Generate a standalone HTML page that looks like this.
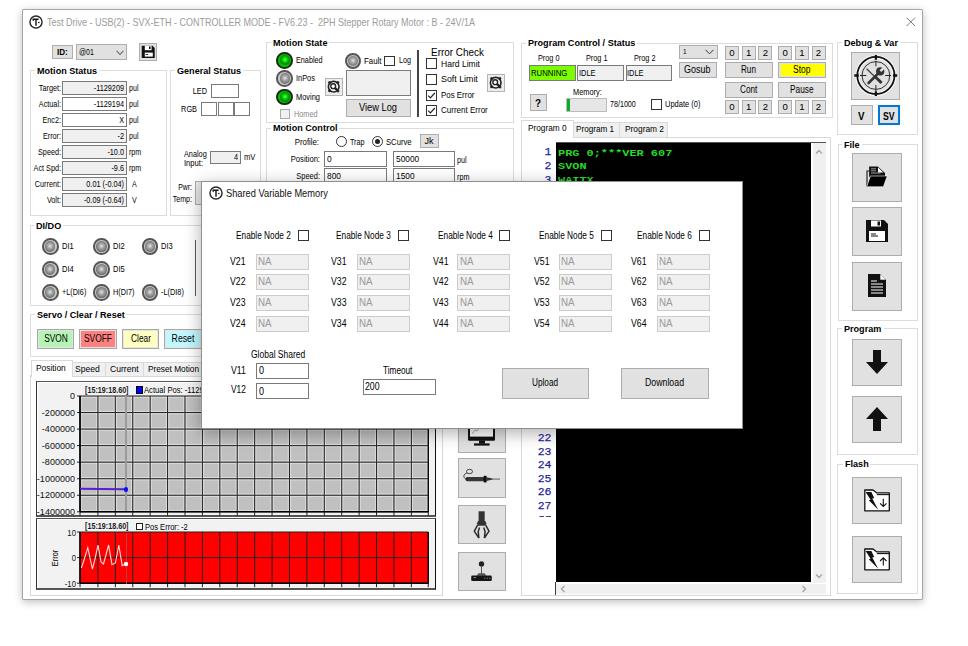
<!DOCTYPE html><html><head><meta charset="utf-8"><style>
html,body{margin:0;padding:0;background:#fff;}
body{width:968px;height:646px;position:relative;overflow:hidden;font-family:"Liberation Sans",sans-serif;}
.a{position:absolute;box-sizing:content-box;}
.t{position:absolute;white-space:pre;}
</style></head><body>
<div class="a" style="left:22px;top:9px;width:899px;height:589px;border:1px solid #a4a4a4;background:#fff;box-shadow:0 2px 9px rgba(0,0,0,0.26);border-radius:1px;"></div>
<svg class="a" style="left:28.1px;top:13.600000000000001px" width="16" height="16" viewBox="28.1 13.600000000000001 16 16"><circle cx="36.1" cy="21.6" r="6.05" fill="none" stroke="#2a2a2a" stroke-width="1.45"/><path d="M33.300000000000004 20.3 V18.8 H38.7 M36.1 18.8 V25.3" stroke="#111" stroke-width="1.4" fill="none"/><circle cx="39.0" cy="22.1" r="0.8" fill="#111"/></svg>
<div class="t" style="left:46.8px;top:14.8px;transform-origin:0 50%;font-family:'Liberation Sans',sans-serif;font-size:11px;font-weight:400;color:#9b9b9b;line-height:14px;transform:scaleX(0.818);">Test Drive - USB(2) - SVX-ETH - CONTROLLER MODE - FV6.23 -  2PH Stepper Rotary Motor : B - 24V/1A</div>
<svg class="a" style="left:906px;top:17px" width="10" height="10" viewBox="0 0 10 10"><path d="M0.6 0.6 L9 9 M9 0.6 L0.6 9" stroke="#6a6a6a" stroke-width="0.9"/></svg>
<div class="a" style="left:52px;top:45px;width:18.5px;height:12px;background:#e1e1e1;border:1px solid #adadad;"></div>
<div class="t" style="left:56.8px;top:45.0px;transform-origin:0 50%;font-family:'Liberation Sans',sans-serif;font-size:9.5px;font-weight:700;color:#000;line-height:14px;transform:scaleX(0.853);">ID:</div>
<div class="a" style="left:76px;top:44px;width:49px;height:14px;background:#e1e1e1;border:1px solid #adadad;"></div>
<div class="t" style="left:79.3px;top:44.5px;transform-origin:0 50%;font-family:'Liberation Sans',sans-serif;font-size:9px;font-weight:400;color:#000;line-height:14px;transform:scaleX(0.778);">@01</div>
<svg class="a" style="left:116px;top:50px" width="8" height="6" viewBox="0 0 8 6"><path d="M0.5 0.8 L4 4.5 L7.5 0.8" stroke="#333" stroke-width="1" fill="none"/></svg>
<div class="a" style="left:139px;top:43px;width:16px;height:16px;background:#e1e1e1;border:1px solid #adadad;"></div>
<svg class="a" style="left:141px;top:45px" width="14" height="14" viewBox="0 0 14 14"><path d="M0.7 0.7 H11.5 L13.7 2.9 V13 H0.7 Z" fill="#111"/><rect x="3.8" y="0.7" width="6.8" height="4.5" fill="#fff"/><rect x="8" y="1.4" width="1.6" height="2.6" fill="#111"/><rect x="3.8" y="7.6" width="8" height="4" fill="#fff"/><rect x="4.6" y="9" width="2.6" height="0.9" fill="#111"/></svg>
<div class="a" style="left:30px;top:70px;width:134.5px;height:144px;border:1px solid #dcdcdc;"></div>
<div class="a" style="left:35px;top:68px;width:63.967807421874994px;height:5px;background:#fff;"></div>
<div class="t" style="left:37px;top:63.5px;transform-origin:0 50%;font-family:'Liberation Sans',sans-serif;font-size:9.5px;font-weight:700;color:#000;line-height:14px;transform:scaleX(0.955);">Motion Status</div>
<div class="a" style="left:62px;top:81px;width:63px;height:12px;background:#f0f0f0;border:1px solid #7a7a7a;"></div>
<div class="t" style="left:-275.6px;width:400px;text-align:right;top:81.0px;transform-origin:100% 50%;font-family:'Liberation Sans',sans-serif;font-size:9px;font-weight:400;color:#000;line-height:14px;transform:scaleX(0.81);">-1129209</div>
<div class="t" style="left:-339.2px;width:400px;text-align:right;top:81.0px;transform-origin:100% 50%;font-family:'Liberation Sans',sans-serif;font-size:9px;font-weight:400;color:#000;line-height:14px;transform:scaleX(0.805);">Target:</div>
<div class="t" style="left:129.3px;top:81.0px;transform-origin:0 50%;font-family:'Liberation Sans',sans-serif;font-size:9px;font-weight:400;color:#000;line-height:14px;transform:scaleX(0.79);">pul</div>
<div class="a" style="left:62px;top:97px;width:63px;height:12px;background:#fff;border:1px solid #7a7a7a;"></div>
<div class="t" style="left:-275.6px;width:400px;text-align:right;top:97.0px;transform-origin:100% 50%;font-family:'Liberation Sans',sans-serif;font-size:9px;font-weight:400;color:#000;line-height:14px;transform:scaleX(0.81);">-1129194</div>
<div class="t" style="left:-339.2px;width:400px;text-align:right;top:97.0px;transform-origin:100% 50%;font-family:'Liberation Sans',sans-serif;font-size:9px;font-weight:400;color:#000;line-height:14px;transform:scaleX(0.805);">Actual:</div>
<div class="t" style="left:129.3px;top:97.0px;transform-origin:0 50%;font-family:'Liberation Sans',sans-serif;font-size:9px;font-weight:400;color:#000;line-height:14px;transform:scaleX(0.79);">pul</div>
<div class="a" style="left:62px;top:113px;width:63px;height:12px;background:#fff;border:1px solid #7a7a7a;"></div>
<div class="t" style="left:-275.6px;width:400px;text-align:right;top:113.0px;transform-origin:100% 50%;font-family:'Liberation Sans',sans-serif;font-size:9px;font-weight:400;color:#000;line-height:14px;transform:scaleX(0.81);">X</div>
<div class="t" style="left:-339.2px;width:400px;text-align:right;top:113.0px;transform-origin:100% 50%;font-family:'Liberation Sans',sans-serif;font-size:9px;font-weight:400;color:#000;line-height:14px;transform:scaleX(0.805);">Enc2:</div>
<div class="t" style="left:129.3px;top:113.0px;transform-origin:0 50%;font-family:'Liberation Sans',sans-serif;font-size:9px;font-weight:400;color:#000;line-height:14px;transform:scaleX(0.79);">pul</div>
<div class="a" style="left:62px;top:129px;width:63px;height:12px;background:#f0f0f0;border:1px solid #7a7a7a;"></div>
<div class="t" style="left:-275.6px;width:400px;text-align:right;top:129.0px;transform-origin:100% 50%;font-family:'Liberation Sans',sans-serif;font-size:9px;font-weight:400;color:#000;line-height:14px;transform:scaleX(0.81);">-2</div>
<div class="t" style="left:-339.2px;width:400px;text-align:right;top:129.0px;transform-origin:100% 50%;font-family:'Liberation Sans',sans-serif;font-size:9px;font-weight:400;color:#000;line-height:14px;transform:scaleX(0.805);">Error:</div>
<div class="t" style="left:129.3px;top:129.0px;transform-origin:0 50%;font-family:'Liberation Sans',sans-serif;font-size:9px;font-weight:400;color:#000;line-height:14px;transform:scaleX(0.79);">pul</div>
<div class="a" style="left:62px;top:145px;width:63px;height:12px;background:#f0f0f0;border:1px solid #7a7a7a;"></div>
<div class="t" style="left:-275.6px;width:400px;text-align:right;top:145.0px;transform-origin:100% 50%;font-family:'Liberation Sans',sans-serif;font-size:9px;font-weight:400;color:#000;line-height:14px;transform:scaleX(0.81);">-10.0</div>
<div class="t" style="left:-339.2px;width:400px;text-align:right;top:145.0px;transform-origin:100% 50%;font-family:'Liberation Sans',sans-serif;font-size:9px;font-weight:400;color:#000;line-height:14px;transform:scaleX(0.805);">Speed:</div>
<div class="t" style="left:129.3px;top:145.0px;transform-origin:0 50%;font-family:'Liberation Sans',sans-serif;font-size:9px;font-weight:400;color:#000;line-height:14px;transform:scaleX(0.79);">rpm</div>
<div class="a" style="left:62px;top:161px;width:63px;height:12px;background:#f0f0f0;border:1px solid #7a7a7a;"></div>
<div class="t" style="left:-275.6px;width:400px;text-align:right;top:161.0px;transform-origin:100% 50%;font-family:'Liberation Sans',sans-serif;font-size:9px;font-weight:400;color:#000;line-height:14px;transform:scaleX(0.81);">-9.6</div>
<div class="t" style="left:-339.2px;width:400px;text-align:right;top:161.0px;transform-origin:100% 50%;font-family:'Liberation Sans',sans-serif;font-size:9px;font-weight:400;color:#000;line-height:14px;transform:scaleX(0.805);">Act Spd:</div>
<div class="t" style="left:129.3px;top:161.0px;transform-origin:0 50%;font-family:'Liberation Sans',sans-serif;font-size:9px;font-weight:400;color:#000;line-height:14px;transform:scaleX(0.79);">rpm</div>
<div class="a" style="left:62px;top:177px;width:63px;height:12px;background:#f0f0f0;border:1px solid #7a7a7a;"></div>
<div class="t" style="left:-275.6px;width:400px;text-align:right;top:177.0px;transform-origin:100% 50%;font-family:'Liberation Sans',sans-serif;font-size:9px;font-weight:400;color:#000;line-height:14px;transform:scaleX(0.81);">0.01 (-0.04)</div>
<div class="t" style="left:-339.2px;width:400px;text-align:right;top:177.0px;transform-origin:100% 50%;font-family:'Liberation Sans',sans-serif;font-size:9px;font-weight:400;color:#000;line-height:14px;transform:scaleX(0.805);">Current:</div>
<div class="t" style="left:131.6px;top:177.0px;transform-origin:0 50%;font-family:'Liberation Sans',sans-serif;font-size:9px;font-weight:400;color:#000;line-height:14px;transform:scaleX(0.79);">A</div>
<div class="a" style="left:62px;top:193px;width:63px;height:12px;background:#f0f0f0;border:1px solid #7a7a7a;"></div>
<div class="t" style="left:-275.6px;width:400px;text-align:right;top:193.0px;transform-origin:100% 50%;font-family:'Liberation Sans',sans-serif;font-size:9px;font-weight:400;color:#000;line-height:14px;transform:scaleX(0.81);">-0.09 (-0.64)</div>
<div class="t" style="left:-339.2px;width:400px;text-align:right;top:193.0px;transform-origin:100% 50%;font-family:'Liberation Sans',sans-serif;font-size:9px;font-weight:400;color:#000;line-height:14px;transform:scaleX(0.805);">Volt:</div>
<div class="t" style="left:131.6px;top:193.0px;transform-origin:0 50%;font-family:'Liberation Sans',sans-serif;font-size:9px;font-weight:400;color:#000;line-height:14px;transform:scaleX(0.79);">V</div>
<div class="a" style="left:169.5px;top:70px;width:89.5px;height:144px;border:1px solid #dcdcdc;"></div>
<div class="a" style="left:175px;top:68px;width:68.030586328125px;height:5px;background:#fff;"></div>
<div class="t" style="left:177px;top:63.5px;transform-origin:0 50%;font-family:'Liberation Sans',sans-serif;font-size:9.5px;font-weight:700;color:#000;line-height:14px;transform:scaleX(0.955);">General Status</div>
<div class="t" style="left:-193px;width:400px;text-align:right;top:83.7px;transform-origin:100% 50%;font-family:'Liberation Sans',sans-serif;font-size:9px;font-weight:400;color:#000;line-height:14px;transform:scaleX(0.811);">LED</div>
<div class="a" style="left:211px;top:84px;width:26px;height:12px;background:#fff;border:1px solid #7a7a7a;"></div>
<div class="t" style="left:-203.2px;width:400px;text-align:right;top:102.0px;transform-origin:100% 50%;font-family:'Liberation Sans',sans-serif;font-size:9px;font-weight:400;color:#000;line-height:14px;transform:scaleX(0.815);">RGB</div>
<div class="a" style="left:201px;top:102px;width:14px;height:12px;background:#fff;border:1px solid #7a7a7a;"></div>
<div class="a" style="left:218px;top:102px;width:14px;height:12px;background:#fff;border:1px solid #7a7a7a;"></div>
<div class="a" style="left:234px;top:102px;width:14px;height:12px;background:#fff;border:1px solid #7a7a7a;"></div>
<div class="t" style="left:183.8px;top:146.7px;transform-origin:0 50%;font-family:'Liberation Sans',sans-serif;font-size:9px;font-weight:400;color:#000;line-height:14px;transform:scaleX(0.81);">Analog</div>
<div class="t" style="left:184.2px;top:156.0px;transform-origin:0 50%;font-family:'Liberation Sans',sans-serif;font-size:9px;font-weight:400;color:#000;line-height:14px;transform:scaleX(0.848);">Input:</div>
<div class="a" style="left:209.6px;top:150.5px;width:29.5px;height:11px;background:#f0f0f0;border:1px solid #7a7a7a;"></div>
<div class="t" style="left:-161.9px;width:400px;text-align:right;top:150.0px;transform-origin:100% 50%;font-family:'Liberation Sans',sans-serif;font-size:9px;font-weight:400;color:#000;line-height:14px;transform:scaleX(0.8);">4</div>
<div class="t" style="left:244.1px;top:150.0px;transform-origin:0 50%;font-family:'Liberation Sans',sans-serif;font-size:9px;font-weight:400;color:#000;line-height:14px;transform:scaleX(0.844);">mV</div>
<div class="t" style="left:-208.5px;width:400px;text-align:right;top:180.4px;transform-origin:100% 50%;font-family:'Liberation Sans',sans-serif;font-size:9px;font-weight:400;color:#000;line-height:14px;transform:scaleX(0.761);">Pwr:</div>
<div class="t" style="left:-208.5px;width:400px;text-align:right;top:192.0px;transform-origin:100% 50%;font-family:'Liberation Sans',sans-serif;font-size:9px;font-weight:400;color:#000;line-height:14px;transform:scaleX(0.788);">Temp:</div>
<div class="a" style="left:195px;top:181px;width:12px;height:22px;background:#e8e8e8;border:1px solid #adadad;"></div>
<div class="a" style="left:266px;top:42px;width:245.5px;height:79px;border:1px solid #dcdcdc;"></div>
<div class="a" style="left:271px;top:40px;width:58.42649453124999px;height:5px;background:#fff;"></div>
<div class="t" style="left:273px;top:35.5px;transform-origin:0 50%;font-family:'Liberation Sans',sans-serif;font-size:9.5px;font-weight:700;color:#000;line-height:14px;transform:scaleX(0.955);">Motion State</div>
<div class="a" style="left:276.40px;top:52.00px;width:12.60px;height:12.60px;border-radius:50%;border:2px solid #1a2a1a;background:#00c400;"></div>
<div class="a" style="left:279.50px;top:55.10px;width:10.40px;height:10.40px;border-radius:50%;background:radial-gradient(circle 6px at 50% 46%, #70ff70 0%, #18e818 25%, #00a000 65%, #005800 100%);"></div>
<div class="t" style="left:295.9px;top:52.6px;transform-origin:0 50%;font-family:'Liberation Sans',sans-serif;font-size:9px;font-weight:400;color:#000;line-height:14px;transform:scaleX(0.805);">Enabled</div>
<div class="a" style="left:276.40px;top:70.20px;width:12.60px;height:12.60px;border-radius:50%;border:2px solid #555;background:#c8c8c8;"></div>
<div class="a" style="left:279.50px;top:73.30px;width:10.40px;height:10.40px;border-radius:50%;background:radial-gradient(circle 6px at 50% 46%, #e4e4e4 0%, #a8a8a8 40%, #7c7c7c 80%, #626262 100%);"></div>
<div class="t" style="left:296.2px;top:71.0px;transform-origin:0 50%;font-family:'Liberation Sans',sans-serif;font-size:9px;font-weight:400;color:#000;line-height:14px;transform:scaleX(0.817);">InPos</div>
<div class="a" style="left:276.40px;top:88.80px;width:12.60px;height:12.60px;border-radius:50%;border:2px solid #1a2a1a;background:#00c400;"></div>
<div class="a" style="left:279.50px;top:91.90px;width:10.40px;height:10.40px;border-radius:50%;background:radial-gradient(circle 6px at 50% 46%, #70ff70 0%, #18e818 25%, #00a000 65%, #005800 100%);"></div>
<div class="t" style="left:295.9px;top:89.6px;transform-origin:0 50%;font-family:'Liberation Sans',sans-serif;font-size:9px;font-weight:400;color:#000;line-height:14px;transform:scaleX(0.824);">Moving</div>
<div class="a" style="left:280px;top:109px;width:7.5px;height:7.5px;background:#f0f0f0;border:1px solid #aaa;"></div>
<div class="t" style="left:293.8px;top:106.7px;transform-origin:0 50%;font-family:'Liberation Sans',sans-serif;font-size:9px;font-weight:400;color:#8a8a8a;line-height:14px;transform:scaleX(0.81);">Homed</div>
<div class="a" style="left:325px;top:78px;width:15.5px;height:15.5px;background:#ececec;border:1px solid #b4b4b4;"></div>
<svg class="a" style="left:325px;top:78px" width="17.5" height="17.5" viewBox="0 0 17.5 17.5"><circle cx="8.7" cy="8.7" r="5.3" fill="#f6f6f6" stroke="#222" stroke-width="1.6"/><circle cx="4.6" cy="4.6" r="1.5" fill="#222"/><circle cx="12.8" cy="4.6" r="1.5" fill="#222"/><circle cx="4.6" cy="12.8" r="1.5" fill="#222"/><circle cx="8.2" cy="8.2" r="2.4" fill="#fff" stroke="#222" stroke-width="1.4"/><path d="M9.9 9.9 L13.9 13.9" stroke="#222" stroke-width="2.3"/></svg>
<div class="a" style="left:344.70px;top:52.70px;width:12.60px;height:12.60px;border-radius:50%;border:2px solid #555;background:#c8c8c8;"></div>
<div class="a" style="left:347.80px;top:55.80px;width:10.40px;height:10.40px;border-radius:50%;background:radial-gradient(circle 6px at 50% 46%, #e4e4e4 0%, #a8a8a8 40%, #7c7c7c 80%, #626262 100%);"></div>
<div class="t" style="left:363.7px;top:54.0px;transform-origin:0 50%;font-family:'Liberation Sans',sans-serif;font-size:9px;font-weight:400;color:#000;line-height:14px;transform:scaleX(0.875);">Fault</div>
<div class="a" style="left:384px;top:55.5px;width:8.5px;height:8.5px;background:#fff;border:1px solid #333;"></div>
<div class="t" style="left:398.5px;top:52.8px;transform-origin:0 50%;font-family:'Liberation Sans',sans-serif;font-size:9px;font-weight:400;color:#000;line-height:14px;transform:scaleX(0.799);">Log</div>
<div class="a" style="left:346px;top:70px;width:63px;height:24px;background:#f0f0f0;border:1px solid #7a7a7a;"></div>
<div class="a" style="left:346px;top:99px;width:63px;height:16px;background:#e1e1e1;border:1px solid #adadad;"></div>
<div class="t" style="left:178px;width:400px;text-align:center;top:101.0px;transform-origin:50% 50%;font-family:'Liberation Sans',sans-serif;font-size:10px;font-weight:400;color:#000;line-height:14px;transform:scaleX(0.928);">View Log</div>
<div class="a" style="left:417.2px;top:50px;width:1.6px;height:67px;background:#444;"></div>
<div class="t" style="left:430.6px;top:45.3px;transform-origin:0 50%;font-family:'Liberation Sans',sans-serif;font-size:11px;font-weight:400;color:#000;line-height:14px;transform:scaleX(0.903);">Error Check</div>
<div class="a" style="left:426px;top:58px;width:9px;height:9px;background:#fff;border:1px solid #333;"></div>
<div class="t" style="left:441.2px;top:56.5px;transform-origin:0 50%;font-family:'Liberation Sans',sans-serif;font-size:9px;font-weight:400;color:#000;line-height:14px;transform:scaleX(0.951);">Hard Limit</div>
<div class="a" style="left:426px;top:74px;width:9px;height:9px;background:#fff;border:1px solid #333;"></div>
<div class="t" style="left:441.2px;top:72.0px;transform-origin:0 50%;font-family:'Liberation Sans',sans-serif;font-size:9px;font-weight:400;color:#000;line-height:14px;transform:scaleX(0.981);">Soft Limit</div>
<div class="a" style="left:426px;top:90px;width:9px;height:9px;background:#fff;border:1px solid #333;"></div>
<svg class="a" style="left:426px;top:90px" width="11" height="11" viewBox="0 0 11 11"><path d="M2.2 5.6 L4.4 7.8 L8.8 3" stroke="#222" stroke-width="1.2" fill="none"/></svg>
<div class="t" style="left:441.2px;top:87.7px;transform-origin:0 50%;font-family:'Liberation Sans',sans-serif;font-size:9px;font-weight:400;color:#000;line-height:14px;transform:scaleX(0.879);">Pos Error</div>
<div class="a" style="left:426px;top:105px;width:9px;height:9px;background:#fff;border:1px solid #333;"></div>
<svg class="a" style="left:426px;top:105px" width="11" height="11" viewBox="0 0 11 11"><path d="M2.2 5.6 L4.4 7.8 L8.8 3" stroke="#222" stroke-width="1.2" fill="none"/></svg>
<div class="t" style="left:441.2px;top:103.0px;transform-origin:0 50%;font-family:'Liberation Sans',sans-serif;font-size:9px;font-weight:400;color:#000;line-height:14px;transform:scaleX(0.891);">Current Error</div>
<div class="a" style="left:487px;top:74px;width:15.5px;height:15.5px;background:#ececec;border:1px solid #b4b4b4;"></div>
<svg class="a" style="left:487px;top:74px" width="17.5" height="17.5" viewBox="0 0 17.5 17.5"><circle cx="8.7" cy="8.7" r="5.3" fill="#f6f6f6" stroke="#222" stroke-width="1.6"/><circle cx="4.6" cy="4.6" r="1.5" fill="#222"/><circle cx="12.8" cy="4.6" r="1.5" fill="#222"/><circle cx="4.6" cy="12.8" r="1.5" fill="#222"/><circle cx="8.2" cy="8.2" r="2.4" fill="#fff" stroke="#222" stroke-width="1.4"/><path d="M9.9 9.9 L13.9 13.9" stroke="#222" stroke-width="2.3"/></svg>
<div class="a" style="left:266px;top:127.5px;width:245.5px;height:60px;border:1px solid #dcdcdc;"></div>
<div class="a" style="left:271px;top:125.5px;width:68.49129921875px;height:5px;background:#fff;"></div>
<div class="t" style="left:273px;top:121.0px;transform-origin:0 50%;font-family:'Liberation Sans',sans-serif;font-size:9.5px;font-weight:700;color:#000;line-height:14px;transform:scaleX(0.955);">Motion Control</div>
<div class="t" style="left:-81px;width:400px;text-align:right;top:134.5px;transform-origin:100% 50%;font-family:'Liberation Sans',sans-serif;font-size:9px;font-weight:400;color:#000;line-height:14px;transform:scaleX(0.864);">Profile:</div>
<div class="a" style="left:335.5px;top:136.0px;width:9px;height:9px;border-radius:50%;border:1px solid #333;background:#fff"></div>
<div class="t" style="left:350px;top:134.5px;transform-origin:0 50%;font-family:'Liberation Sans',sans-serif;font-size:9px;font-weight:400;color:#000;line-height:14px;transform:scaleX(0.798);">Trap</div>
<div class="a" style="left:371.5px;top:136.0px;width:9px;height:9px;border-radius:50%;border:1px solid #333;background:#fff"></div>
<div class="a" style="left:374.5px;top:139.0px;width:5px;height:5px;border-radius:50%;background:#222"></div>
<div class="t" style="left:386.3px;top:134.5px;transform-origin:0 50%;font-family:'Liberation Sans',sans-serif;font-size:9px;font-weight:400;color:#000;line-height:14px;transform:scaleX(0.853);">SCurve</div>
<div class="a" style="left:420px;top:134px;width:17px;height:12px;background:#e1e1e1;border:1px solid #adadad;"></div>
<div class="t" style="left:229px;width:400px;text-align:center;top:134.0px;transform-origin:50% 50%;font-family:'Liberation Sans',sans-serif;font-size:9px;font-weight:400;color:#000;line-height:14px;">Jk</div>
<div class="t" style="left:-80.5px;width:400px;text-align:right;top:152.0px;transform-origin:100% 50%;font-family:'Liberation Sans',sans-serif;font-size:9px;font-weight:400;color:#000;line-height:14px;transform:scaleX(0.846);">Position:</div>
<div class="a" style="left:324px;top:151px;width:61px;height:14px;background:#fff;border:1px solid #7a7a7a;"></div>
<div class="t" style="left:327px;top:152.0px;transform-origin:0 50%;font-family:'Liberation Sans',sans-serif;font-size:9.5px;font-weight:400;color:#000;line-height:14px;transform:scaleX(0.88);">0</div>
<div class="a" style="left:393px;top:151px;width:60px;height:14px;background:#fff;border:1px solid #7a7a7a;"></div>
<div class="t" style="left:396px;top:152.0px;transform-origin:0 50%;font-family:'Liberation Sans',sans-serif;font-size:9.5px;font-weight:400;color:#000;line-height:14px;transform:scaleX(0.88);">50000</div>
<div class="t" style="left:457px;top:153.0px;transform-origin:0 50%;font-family:'Liberation Sans',sans-serif;font-size:9px;font-weight:400;color:#000;line-height:14px;transform:scaleX(0.8);">pul</div>
<div class="t" style="left:-80.5px;width:400px;text-align:right;top:169.0px;transform-origin:100% 50%;font-family:'Liberation Sans',sans-serif;font-size:9px;font-weight:400;color:#000;line-height:14px;transform:scaleX(0.831);">Speed:</div>
<div class="a" style="left:324px;top:168px;width:61px;height:14px;background:#fff;border:1px solid #7a7a7a;"></div>
<div class="t" style="left:327px;top:169.0px;transform-origin:0 50%;font-family:'Liberation Sans',sans-serif;font-size:9.5px;font-weight:400;color:#000;line-height:14px;transform:scaleX(0.88);">800</div>
<div class="a" style="left:393px;top:168px;width:60px;height:14px;background:#fff;border:1px solid #7a7a7a;"></div>
<div class="t" style="left:396px;top:169.0px;transform-origin:0 50%;font-family:'Liberation Sans',sans-serif;font-size:9.5px;font-weight:400;color:#000;line-height:14px;transform:scaleX(0.88);">1500</div>
<div class="t" style="left:457px;top:169.5px;transform-origin:0 50%;font-family:'Liberation Sans',sans-serif;font-size:9px;font-weight:400;color:#000;line-height:14px;transform:scaleX(0.8);">rpm</div>
<div class="a" style="left:521px;top:42.5px;width:310px;height:73px;border:1px solid #dcdcdc;"></div>
<div class="a" style="left:526px;top:40.5px;width:111.36453203125px;height:5px;background:#fff;"></div>
<div class="t" style="left:528px;top:36.0px;transform-origin:0 50%;font-family:'Liberation Sans',sans-serif;font-size:9.5px;font-weight:700;color:#000;line-height:14px;transform:scaleX(0.955);">Program Control / Status</div>
<div class="t" style="left:537.5px;top:51.0px;transform-origin:0 50%;font-family:'Liberation Sans',sans-serif;font-size:9px;font-weight:400;color:#000;line-height:14px;transform:scaleX(0.811);">Prog 0</div>
<div class="a" style="left:529px;top:65.2px;width:44.8px;height:14.3px;background:#7cfc00;border:1px solid #7a7a7a;"></div>
<div class="t" style="left:530.5px;top:66.0px;transform-origin:0 50%;font-family:'Liberation Sans',sans-serif;font-size:9.5px;font-weight:400;color:#000;line-height:14px;transform:scaleX(0.819);">RUNNING</div>
<div class="t" style="left:585.5px;top:51.0px;transform-origin:0 50%;font-family:'Liberation Sans',sans-serif;font-size:9px;font-weight:400;color:#000;line-height:14px;transform:scaleX(0.811);">Prog 1</div>
<div class="a" style="left:577px;top:65.2px;width:44.8px;height:14.3px;background:#f0f0f0;border:1px solid #7a7a7a;"></div>
<div class="t" style="left:578.5px;top:66.0px;transform-origin:0 50%;font-family:'Liberation Sans',sans-serif;font-size:9.5px;font-weight:400;color:#000;line-height:14px;transform:scaleX(0.781);">IDLE</div>
<div class="t" style="left:634.0px;top:51.0px;transform-origin:0 50%;font-family:'Liberation Sans',sans-serif;font-size:9px;font-weight:400;color:#000;line-height:14px;transform:scaleX(0.811);">Prog 2</div>
<div class="a" style="left:625.5px;top:65.2px;width:44.8px;height:14.3px;background:#f0f0f0;border:1px solid #7a7a7a;"></div>
<div class="t" style="left:627.0px;top:66.0px;transform-origin:0 50%;font-family:'Liberation Sans',sans-serif;font-size:9.5px;font-weight:400;color:#000;line-height:14px;transform:scaleX(0.781);">IDLE</div>
<div class="a" style="left:678.5px;top:45.3px;width:37px;height:11.5px;background:#e1e1e1;border:1px solid #adadad;"></div>
<div class="t" style="left:683px;top:44.5px;transform-origin:0 50%;font-family:'Liberation Sans',sans-serif;font-size:8px;font-weight:400;color:#000;line-height:14px;transform:scaleX(0.8);">1</div>
<svg class="a" style="left:705px;top:49px" width="9" height="6" viewBox="0 0 9 6"><path d="M0.5 0.8 L4.5 4.8 L8.5 0.8" stroke="#333" stroke-width="1" fill="none"/></svg>
<div class="a" style="left:679.2px;top:61.6px;width:35.5px;height:14px;background:#e1e1e1;border:1px solid #adadad;"></div>
<div class="t" style="left:684.3px;top:63.0px;transform-origin:0 50%;font-family:'Liberation Sans',sans-serif;font-size:10px;font-weight:400;color:#000;line-height:14px;transform:scaleX(0.896);">Gosub</div>
<div class="a" style="left:725px;top:46px;width:12px;height:12px;background:#e1e1e1;border:1px solid #adadad;"></div>
<div class="t" style="left:531.9px;width:400px;text-align:center;top:46.3px;transform-origin:50% 50%;font-family:'Liberation Sans',sans-serif;font-size:9.6px;font-weight:400;color:#000;line-height:14px;">0</div>
<div class="a" style="left:742px;top:46px;width:12px;height:12px;background:#e1e1e1;border:1px solid #adadad;"></div>
<div class="t" style="left:548.6999999999999px;width:400px;text-align:center;top:46.3px;transform-origin:50% 50%;font-family:'Liberation Sans',sans-serif;font-size:9.6px;font-weight:400;color:#000;line-height:14px;">1</div>
<div class="a" style="left:758px;top:46px;width:12px;height:12px;background:#e1e1e1;border:1px solid #adadad;"></div>
<div class="t" style="left:565.3px;width:400px;text-align:center;top:46.3px;transform-origin:50% 50%;font-family:'Liberation Sans',sans-serif;font-size:9.6px;font-weight:400;color:#000;line-height:14px;">2</div>
<div class="a" style="left:778px;top:46px;width:12px;height:12px;background:#e1e1e1;border:1px solid #adadad;"></div>
<div class="t" style="left:585.1px;width:400px;text-align:center;top:46.3px;transform-origin:50% 50%;font-family:'Liberation Sans',sans-serif;font-size:9.6px;font-weight:400;color:#000;line-height:14px;">0</div>
<div class="a" style="left:795px;top:46px;width:12px;height:12px;background:#e1e1e1;border:1px solid #adadad;"></div>
<div class="t" style="left:601.9px;width:400px;text-align:center;top:46.3px;transform-origin:50% 50%;font-family:'Liberation Sans',sans-serif;font-size:9.6px;font-weight:400;color:#000;line-height:14px;">1</div>
<div class="a" style="left:812px;top:46px;width:12px;height:12px;background:#e1e1e1;border:1px solid #adadad;"></div>
<div class="t" style="left:618.5px;width:400px;text-align:center;top:46.3px;transform-origin:50% 50%;font-family:'Liberation Sans',sans-serif;font-size:9.6px;font-weight:400;color:#000;line-height:14px;">2</div>
<div class="a" style="left:725px;top:62px;width:46px;height:14px;background:#e1e1e1;border:1px solid #adadad;"></div>
<div class="t" style="left:740.8px;top:62.5px;transform-origin:0 50%;font-family:'Liberation Sans',sans-serif;font-size:10px;font-weight:400;color:#000;line-height:14px;transform:scaleX(0.812);">Run</div>
<div class="a" style="left:778px;top:62px;width:46px;height:14px;background:#e1e1e1;border:1px solid #adadad;"></div>
<div class="a" style="left:780.5px;top:64px;width:44px;height:11.5px;background:#ffff00;"></div>
<div class="t" style="left:792.7px;top:62.5px;transform-origin:0 50%;font-family:'Liberation Sans',sans-serif;font-size:10px;font-weight:400;color:#000;line-height:14px;transform:scaleX(0.851);">Stop</div>
<div class="a" style="left:725px;top:82px;width:46px;height:14px;background:#e1e1e1;border:1px solid #adadad;"></div>
<div class="t" style="left:739.8px;top:82.5px;transform-origin:0 50%;font-family:'Liberation Sans',sans-serif;font-size:10px;font-weight:400;color:#000;line-height:14px;transform:scaleX(0.814);">Cont</div>
<div class="a" style="left:778px;top:82px;width:46px;height:14px;background:#e1e1e1;border:1px solid #adadad;"></div>
<div class="t" style="left:790px;top:82.5px;transform-origin:0 50%;font-family:'Liberation Sans',sans-serif;font-size:10px;font-weight:400;color:#000;line-height:14px;transform:scaleX(0.829);">Pause</div>
<div class="a" style="left:725px;top:99.5px;width:12px;height:12px;background:#e1e1e1;border:1px solid #adadad;"></div>
<div class="t" style="left:531.9px;width:400px;text-align:center;top:99.8px;transform-origin:50% 50%;font-family:'Liberation Sans',sans-serif;font-size:9.6px;font-weight:400;color:#000;line-height:14px;">0</div>
<div class="a" style="left:742px;top:99.5px;width:12px;height:12px;background:#e1e1e1;border:1px solid #adadad;"></div>
<div class="t" style="left:548.6999999999999px;width:400px;text-align:center;top:99.8px;transform-origin:50% 50%;font-family:'Liberation Sans',sans-serif;font-size:9.6px;font-weight:400;color:#000;line-height:14px;">1</div>
<div class="a" style="left:758px;top:99.5px;width:12px;height:12px;background:#e1e1e1;border:1px solid #adadad;"></div>
<div class="t" style="left:565.3px;width:400px;text-align:center;top:99.8px;transform-origin:50% 50%;font-family:'Liberation Sans',sans-serif;font-size:9.6px;font-weight:400;color:#000;line-height:14px;">2</div>
<div class="a" style="left:778px;top:99.5px;width:12px;height:12px;background:#e1e1e1;border:1px solid #adadad;"></div>
<div class="t" style="left:585.1px;width:400px;text-align:center;top:99.8px;transform-origin:50% 50%;font-family:'Liberation Sans',sans-serif;font-size:9.6px;font-weight:400;color:#000;line-height:14px;">0</div>
<div class="a" style="left:795px;top:99.5px;width:12px;height:12px;background:#e1e1e1;border:1px solid #adadad;"></div>
<div class="t" style="left:601.9px;width:400px;text-align:center;top:99.8px;transform-origin:50% 50%;font-family:'Liberation Sans',sans-serif;font-size:9.6px;font-weight:400;color:#000;line-height:14px;">1</div>
<div class="a" style="left:812px;top:99.5px;width:12px;height:12px;background:#e1e1e1;border:1px solid #adadad;"></div>
<div class="t" style="left:618.5px;width:400px;text-align:center;top:99.8px;transform-origin:50% 50%;font-family:'Liberation Sans',sans-serif;font-size:9.6px;font-weight:400;color:#000;line-height:14px;">2</div>
<div class="a" style="left:529.6px;top:94px;width:15px;height:15px;background:#e1e1e1;border:1px solid #adadad;"></div>
<div class="t" style="left:338px;width:400px;text-align:center;top:95.5px;transform-origin:50% 50%;font-family:'Liberation Sans',sans-serif;font-size:11px;font-weight:700;color:#000;line-height:14px;transform:scaleX(0.9);">?</div>
<div class="t" style="left:572.9px;top:85.0px;transform-origin:0 50%;font-family:'Liberation Sans',sans-serif;font-size:9px;font-weight:400;color:#000;line-height:14px;transform:scaleX(0.82);">Memory:</div>
<div class="a" style="left:566px;top:97.5px;width:39px;height:12px;background:#e6e6e6;border:1px solid #bcbcbc;"></div>
<div class="a" style="left:567px;top:98.5px;width:2.5px;height:12px;background:#06b025;"></div>
<div class="t" style="left:609.9px;top:97.0px;transform-origin:0 50%;font-family:'Liberation Sans',sans-serif;font-size:9px;font-weight:400;color:#000;line-height:14px;transform:scaleX(0.793);">78/1000</div>
<div class="a" style="left:651px;top:99px;width:9px;height:9px;background:#fff;border:1px solid #333;"></div>
<div class="t" style="left:665.4px;top:97.0px;transform-origin:0 50%;font-family:'Liberation Sans',sans-serif;font-size:9px;font-weight:400;color:#000;line-height:14px;transform:scaleX(0.833);">Update (0)</div>
<div class="a" style="left:521px;top:137px;width:308px;height:457px;background:#fff;border:1px solid #d9d9d9;"></div>
<div class="a" style="left:572.5px;top:122px;width:46px;height:13.5px;background:#f0f0f0;border:1px solid #d9d9d9;"></div>
<div class="a" style="left:619.2px;top:122px;width:47px;height:13.5px;background:#f0f0f0;border:1px solid #d9d9d9;"></div>
<div class="a" style="left:521px;top:120px;width:50.5px;height:17px;background:#fff;border:1px solid #d9d9d9;border-bottom:none;"></div>
<div class="t" style="left:527.6px;top:121.19999999999999px;transform-origin:0 50%;font-family:'Liberation Sans',sans-serif;font-size:9.5px;font-weight:400;color:#000;line-height:14px;transform:scaleX(0.87);">Program 0</div>
<div class="t" style="left:576.2px;top:122.4px;transform-origin:0 50%;font-family:'Liberation Sans',sans-serif;font-size:9.5px;font-weight:400;color:#000;line-height:14px;transform:scaleX(0.857);">Program 1</div>
<div class="t" style="left:624.8px;top:122.4px;transform-origin:0 50%;font-family:'Liberation Sans',sans-serif;font-size:9.5px;font-weight:400;color:#000;line-height:14px;transform:scaleX(0.879);">Program 2</div>
<div class="a" style="left:556px;top:143px;width:255px;height:439px;background:#000;"></div>
<div class="a" style="left:813px;top:143px;width:13px;height:440px;background:#f0f0f0;"></div>
<div class="a" style="left:556px;top:142px;width:270px;height:1.2px;background:#555;"></div>
<div class="a" style="left:556px;top:583.5px;width:270px;height:10.5px;background:#f0f0f0;"></div>
<svg class="a" style="left:814px;top:148px" width="10" height="8" viewBox="0 0 10 8"><path d="M2 5.5 L5 2.5 L8 5.5" stroke="#a6a6a6" stroke-width="1.4" fill="none"/></svg>
<svg class="a" style="left:814px;top:572px" width="10" height="8" viewBox="0 0 10 8"><path d="M2 2.5 L5 5.5 L8 2.5" stroke="#a6a6a6" stroke-width="1.4" fill="none"/></svg>
<svg class="a" style="left:559px;top:584px" width="8" height="10" viewBox="0 0 8 10"><path d="M5.5 2 L2.5 5 L5.5 8" stroke="#a6a6a6" stroke-width="1.4" fill="none"/></svg>
<svg class="a" style="left:800px;top:584px" width="8" height="10" viewBox="0 0 8 10"><path d="M2.5 2 L5.5 5 L2.5 8" stroke="#a6a6a6" stroke-width="1.4" fill="none"/></svg>
<div class="t" style="left:151.5px;width:400px;text-align:right;top:145.3px;transform-origin:100% 50%;font-family:'Liberation Mono',monospace;font-size:11.5px;font-weight:400;color:#1e1e9c;line-height:13px;-webkit-text-stroke:0.25px #1e1e9c;">1</div>
<div class="t" style="left:558.2px;top:146.5px;transform-origin:0 50%;font-family:'Liberation Mono',monospace;font-size:9.8px;font-weight:700;color:#22dd22;line-height:13px;transform:scaleX(1.215);">PRG 0;***VER 607</div>
<div class="t" style="left:151.5px;width:400px;text-align:right;top:158.9px;transform-origin:100% 50%;font-family:'Liberation Mono',monospace;font-size:11.5px;font-weight:400;color:#1e1e9c;line-height:13px;-webkit-text-stroke:0.25px #1e1e9c;">2</div>
<div class="t" style="left:558.2px;top:160.1px;transform-origin:0 50%;font-family:'Liberation Mono',monospace;font-size:9.8px;font-weight:700;color:#22dd22;line-height:13px;transform:scaleX(1.215);">SVON</div>
<div class="t" style="left:151.5px;width:400px;text-align:right;top:172.5px;transform-origin:100% 50%;font-family:'Liberation Mono',monospace;font-size:11.5px;font-weight:400;color:#1e1e9c;line-height:13px;-webkit-text-stroke:0.25px #1e1e9c;">3</div>
<div class="t" style="left:558.2px;top:173.7px;transform-origin:0 50%;font-family:'Liberation Mono',monospace;font-size:9.8px;font-weight:700;color:#22dd22;line-height:13px;transform:scaleX(1.215);">WAITX</div>
<div class="t" style="left:151.5px;width:400px;text-align:right;top:186.10000000000002px;transform-origin:100% 50%;font-family:'Liberation Mono',monospace;font-size:11.5px;font-weight:400;color:#1e1e9c;line-height:13px;-webkit-text-stroke:0.25px #1e1e9c;">4</div>
<div class="t" style="left:151.5px;width:400px;text-align:right;top:199.70000000000002px;transform-origin:100% 50%;font-family:'Liberation Mono',monospace;font-size:11.5px;font-weight:400;color:#1e1e9c;line-height:13px;-webkit-text-stroke:0.25px #1e1e9c;">5</div>
<div class="t" style="left:151.5px;width:400px;text-align:right;top:213.3px;transform-origin:100% 50%;font-family:'Liberation Mono',monospace;font-size:11.5px;font-weight:400;color:#1e1e9c;line-height:13px;-webkit-text-stroke:0.25px #1e1e9c;">6</div>
<div class="t" style="left:151.5px;width:400px;text-align:right;top:226.9px;transform-origin:100% 50%;font-family:'Liberation Mono',monospace;font-size:11.5px;font-weight:400;color:#1e1e9c;line-height:13px;-webkit-text-stroke:0.25px #1e1e9c;">7</div>
<div class="t" style="left:151.5px;width:400px;text-align:right;top:240.5px;transform-origin:100% 50%;font-family:'Liberation Mono',monospace;font-size:11.5px;font-weight:400;color:#1e1e9c;line-height:13px;-webkit-text-stroke:0.25px #1e1e9c;">8</div>
<div class="t" style="left:151.5px;width:400px;text-align:right;top:254.10000000000002px;transform-origin:100% 50%;font-family:'Liberation Mono',monospace;font-size:11.5px;font-weight:400;color:#1e1e9c;line-height:13px;-webkit-text-stroke:0.25px #1e1e9c;">9</div>
<div class="t" style="left:151.5px;width:400px;text-align:right;top:267.7px;transform-origin:100% 50%;font-family:'Liberation Mono',monospace;font-size:11.5px;font-weight:400;color:#1e1e9c;line-height:13px;-webkit-text-stroke:0.25px #1e1e9c;">10</div>
<div class="t" style="left:151.5px;width:400px;text-align:right;top:281.3px;transform-origin:100% 50%;font-family:'Liberation Mono',monospace;font-size:11.5px;font-weight:400;color:#1e1e9c;line-height:13px;-webkit-text-stroke:0.25px #1e1e9c;">11</div>
<div class="t" style="left:151.5px;width:400px;text-align:right;top:294.9px;transform-origin:100% 50%;font-family:'Liberation Mono',monospace;font-size:11.5px;font-weight:400;color:#1e1e9c;line-height:13px;-webkit-text-stroke:0.25px #1e1e9c;">12</div>
<div class="t" style="left:151.5px;width:400px;text-align:right;top:308.5px;transform-origin:100% 50%;font-family:'Liberation Mono',monospace;font-size:11.5px;font-weight:400;color:#1e1e9c;line-height:13px;-webkit-text-stroke:0.25px #1e1e9c;">13</div>
<div class="t" style="left:151.5px;width:400px;text-align:right;top:322.1px;transform-origin:100% 50%;font-family:'Liberation Mono',monospace;font-size:11.5px;font-weight:400;color:#1e1e9c;line-height:13px;-webkit-text-stroke:0.25px #1e1e9c;">14</div>
<div class="t" style="left:151.5px;width:400px;text-align:right;top:335.70000000000005px;transform-origin:100% 50%;font-family:'Liberation Mono',monospace;font-size:11.5px;font-weight:400;color:#1e1e9c;line-height:13px;-webkit-text-stroke:0.25px #1e1e9c;">15</div>
<div class="t" style="left:151.5px;width:400px;text-align:right;top:349.3px;transform-origin:100% 50%;font-family:'Liberation Mono',monospace;font-size:11.5px;font-weight:400;color:#1e1e9c;line-height:13px;-webkit-text-stroke:0.25px #1e1e9c;">16</div>
<div class="t" style="left:151.5px;width:400px;text-align:right;top:362.9px;transform-origin:100% 50%;font-family:'Liberation Mono',monospace;font-size:11.5px;font-weight:400;color:#1e1e9c;line-height:13px;-webkit-text-stroke:0.25px #1e1e9c;">17</div>
<div class="t" style="left:151.5px;width:400px;text-align:right;top:376.5px;transform-origin:100% 50%;font-family:'Liberation Mono',monospace;font-size:11.5px;font-weight:400;color:#1e1e9c;line-height:13px;-webkit-text-stroke:0.25px #1e1e9c;">18</div>
<div class="t" style="left:151.5px;width:400px;text-align:right;top:390.1px;transform-origin:100% 50%;font-family:'Liberation Mono',monospace;font-size:11.5px;font-weight:400;color:#1e1e9c;line-height:13px;-webkit-text-stroke:0.25px #1e1e9c;">19</div>
<div class="t" style="left:151.5px;width:400px;text-align:right;top:403.7px;transform-origin:100% 50%;font-family:'Liberation Mono',monospace;font-size:11.5px;font-weight:400;color:#1e1e9c;line-height:13px;-webkit-text-stroke:0.25px #1e1e9c;">20</div>
<div class="t" style="left:151.5px;width:400px;text-align:right;top:417.3px;transform-origin:100% 50%;font-family:'Liberation Mono',monospace;font-size:11.5px;font-weight:400;color:#1e1e9c;line-height:13px;-webkit-text-stroke:0.25px #1e1e9c;">21</div>
<div class="t" style="left:151.5px;width:400px;text-align:right;top:430.9px;transform-origin:100% 50%;font-family:'Liberation Mono',monospace;font-size:11.5px;font-weight:400;color:#1e1e9c;line-height:13px;-webkit-text-stroke:0.25px #1e1e9c;">22</div>
<div class="t" style="left:151.5px;width:400px;text-align:right;top:444.5px;transform-origin:100% 50%;font-family:'Liberation Mono',monospace;font-size:11.5px;font-weight:400;color:#1e1e9c;line-height:13px;-webkit-text-stroke:0.25px #1e1e9c;">23</div>
<div class="t" style="left:151.5px;width:400px;text-align:right;top:458.1px;transform-origin:100% 50%;font-family:'Liberation Mono',monospace;font-size:11.5px;font-weight:400;color:#1e1e9c;line-height:13px;-webkit-text-stroke:0.25px #1e1e9c;">24</div>
<div class="t" style="left:151.5px;width:400px;text-align:right;top:471.7px;transform-origin:100% 50%;font-family:'Liberation Mono',monospace;font-size:11.5px;font-weight:400;color:#1e1e9c;line-height:13px;-webkit-text-stroke:0.25px #1e1e9c;">25</div>
<div class="t" style="left:151.5px;width:400px;text-align:right;top:485.3px;transform-origin:100% 50%;font-family:'Liberation Mono',monospace;font-size:11.5px;font-weight:400;color:#1e1e9c;line-height:13px;-webkit-text-stroke:0.25px #1e1e9c;">26</div>
<div class="t" style="left:151.5px;width:400px;text-align:right;top:498.9px;transform-origin:100% 50%;font-family:'Liberation Mono',monospace;font-size:11.5px;font-weight:400;color:#1e1e9c;line-height:13px;-webkit-text-stroke:0.25px #1e1e9c;">27</div>
<div class="t" style="left:151.5px;width:400px;text-align:right;top:512.5px;transform-origin:100% 50%;font-family:'Liberation Mono',monospace;font-size:11.5px;font-weight:400;color:#1e1e9c;line-height:13px;-webkit-text-stroke:0.25px #1e1e9c;">28</div>
<div class="a" style="left:523px;top:516.5px;width:32px;height:10px;background:#fff;"></div>
<div class="a" style="left:539.5px;top:515.5px;width:4px;height:1.2px;background:#3a3aa8;"></div>
<div class="a" style="left:546.5px;top:515.5px;width:4px;height:1.2px;background:#3a3aa8;"></div>
<div class="a" style="left:555.2px;top:582px;width:1.3px;height:12.5px;background:#3a3a3a;"></div>
<div class="a" style="left:837px;top:42px;width:79px;height:91px;border:1px solid #dcdcdc;"></div>
<div class="a" style="left:841.9px;top:40px;width:57.9416828125px;height:5px;background:#fff;"></div>
<div class="t" style="left:843.9px;top:35.5px;transform-origin:0 50%;font-family:'Liberation Sans',sans-serif;font-size:9.5px;font-weight:700;color:#000;line-height:14px;transform:scaleX(0.955);">Debug & Var</div>
<div class="a" style="left:850.5px;top:52px;width:47px;height:45.5px;background:#e1e1e1;border:1px solid #adadad;"></div>
<svg class="a" style="left:851px;top:53px" width="48" height="46" viewBox="0 0 48 46"><circle cx="24.9" cy="22.5" r="18.6" fill="none" stroke="#fafafa" stroke-width="4"/><circle cx="24.9" cy="22.5" r="18.6" fill="none" stroke="#111" stroke-width="1.8"/><circle cx="24.9" cy="22.5" r="13.9" fill="none" stroke="#333" stroke-width="1"/><path d="M3.3 22.5 H7.8 M42 22.5 H46.2 M24.9 2 V6.8 M24.9 38.2 V43" stroke="#111" stroke-width="2.3"/><path d="M9 22.5 H15.3 M34.2 22.5 H40 M24.9 7.8 V13.3 M24.9 32 V38" stroke="#222" stroke-width="1"/><path d="M15.6 15.8 L24.5 24.5" stroke="#444" stroke-width="1.3"/><path d="M24 23.5 L30.6 30" stroke="#333" stroke-width="3"/><path d="M17.6 30 L28.2 19.4" stroke="#333" stroke-width="2.6" stroke-linecap="round"/><circle cx="29.2" cy="18.4" r="4.1" fill="#333"/><rect x="-1.2" y="-5.5" width="2.4" height="5.5" transform="translate(29.4 18.2) rotate(45)" fill="#e1e1e1"/></svg>
<div class="a" style="left:850.5px;top:105px;width:20px;height:18px;background:#e1e1e1;border:1px solid #adadad;"></div>
<div class="t" style="left:857.9px;top:108.5px;transform-origin:0 50%;font-family:'Liberation Sans',sans-serif;font-size:10.5px;font-weight:700;color:#000;line-height:14px;transform:scaleX(0.928);">V</div>
<div class="a" style="left:878px;top:105px;width:18px;height:16px;background:#e1e1e1;border:2px solid #0078d7;"></div>
<div class="t" style="left:882.6px;top:108.5px;transform-origin:0 50%;font-family:'Liberation Sans',sans-serif;font-size:10.5px;font-weight:700;color:#000;line-height:14px;transform:scaleX(0.828);">SV</div>
<div class="a" style="left:837.5px;top:144px;width:78.5px;height:175px;border:1px solid #dcdcdc;"></div>
<div class="a" style="left:841.9px;top:142px;width:19.62738125px;height:5px;background:#fff;"></div>
<div class="t" style="left:843.9px;top:137.5px;transform-origin:0 50%;font-family:'Liberation Sans',sans-serif;font-size:9.5px;font-weight:700;color:#000;line-height:14px;transform:scaleX(0.955);">File</div>
<div class="a" style="left:852.3px;top:153px;width:48px;height:47px;background:#e1e1e1;border:1px solid #adadad;"></div>
<div class="a" style="left:852.3px;top:207px;width:48px;height:47px;background:#e1e1e1;border:1px solid #adadad;"></div>
<div class="a" style="left:852.3px;top:262px;width:48px;height:47px;background:#e1e1e1;border:1px solid #adadad;"></div>
<svg class="a" style="left:862px;top:162px" width="30" height="30" viewBox="862 162 30 30"><path d="M867 186.5 V171 H869.5" fill="none" stroke="#222" stroke-width="1.2"/><path d="M869.1 166.4 H877.8 L885 172.9 V177 H869.1 Z" fill="#111"/><path d="M878 167.6 L883.4 172.6 H878 Z" fill="#fff"/><path d="M871 168.8 H876 M871 170.8 H876 M871 173 H880.5" stroke="#bbb" stroke-width="0.8"/><path d="M870.4 176 H887.2 L883.4 186.8 H866.7 Z" fill="#000" stroke="#fff" stroke-width="0.6"/></svg>
<svg class="a" style="left:865px;top:219px" width="24" height="24" viewBox="0 0 24 24"><path d="M1 1 H19 L23 5 V23 H1 Z" fill="#111"/><rect x="6" y="1.5" width="10" height="6" fill="#fff"/><rect x="12.5" y="2.5" width="2.5" height="4" fill="#111"/><rect x="4" y="12" width="16" height="10" fill="#fff"/><path d="M6 15 H11 M6 17 H13" stroke="#111" stroke-width="1"/></svg>
<svg class="a" style="left:867px;top:273px" width="20" height="25" viewBox="0 0 20 25"><path d="M1 1 H13 L19 7 V24 H1 Z" fill="#111"/><path d="M13 1 V7 H19" fill="#fff" stroke="#111" stroke-width="0.6"/><path d="M4 8 H10 M4 11 H16 M4 14 H16 M4 17 H16 M4 20 H16" stroke="#fff" stroke-width="1.2"/></svg>
<div class="a" style="left:836.7px;top:328px;width:79.5px;height:124.5px;border:1px solid #dcdcdc;"></div>
<div class="a" style="left:842.3px;top:326px;width:41.30923867187499px;height:5px;background:#fff;"></div>
<div class="t" style="left:844.3px;top:321.5px;transform-origin:0 50%;font-family:'Liberation Sans',sans-serif;font-size:9.5px;font-weight:700;color:#000;line-height:14px;transform:scaleX(0.955);">Program</div>
<div class="a" style="left:852.4px;top:339px;width:48px;height:45px;background:#e1e1e1;border:1px solid #adadad;"></div>
<div class="a" style="left:852.4px;top:396px;width:48px;height:45px;background:#e1e1e1;border:1px solid #adadad;"></div>
<svg class="a" style="left:864px;top:349px" width="26" height="26" viewBox="0 0 26 26"><path d="M9 1 H17 V13 H24 L13 25 L2 13 H9 Z" fill="#111"/></svg>
<svg class="a" style="left:864px;top:406px" width="26" height="26" viewBox="0 0 26 26"><path d="M9 25 H17 V13 H24 L13 1 L2 13 H9 Z" fill="#111"/></svg>
<div class="a" style="left:836.7px;top:463.5px;width:79.5px;height:128px;border:1px solid #dcdcdc;"></div>
<div class="a" style="left:842.8px;top:461.5px;width:27.69340078125px;height:5px;background:#fff;"></div>
<div class="t" style="left:844.8px;top:457.0px;transform-origin:0 50%;font-family:'Liberation Sans',sans-serif;font-size:9.5px;font-weight:700;color:#000;line-height:14px;transform:scaleX(0.955);">Flash</div>
<div class="a" style="left:852.4px;top:477px;width:48px;height:45px;background:#e1e1e1;border:1px solid #adadad;"></div>
<div class="a" style="left:852.4px;top:536px;width:48px;height:45px;background:#e1e1e1;border:1px solid #adadad;"></div>
<svg class="a" style="left:860px;top:485px" width="34" height="30" viewBox="860 485 34 30"><path d="M864.8 490 H873 L876.8 492.9 H889.3 V510.8 H864.8 Z" fill="#fff" stroke="#111" stroke-width="1.3" stroke-linejoin="round"/><path d="M876.8 494.6 H889.3" stroke="#111" stroke-width="1.1"/><path d="M865.6 492 H871.4 L874.2 498 L872.3 498.5 L878.2 509.8 L868.8 500.3 L870.6 499.7 Z" fill="#111"/><path d="M883.3 498.8 V506.5 M880.1 503.3 L883.3 506.5 L886.5 503.3" stroke="#111" stroke-width="1.1" fill="none"/></svg>
<svg class="a" style="left:860px;top:544px" width="34" height="30" viewBox="860 485 34 30"><path d="M864.8 490 H873 L876.8 492.9 H889.3 V510.8 H864.8 Z" fill="#fff" stroke="#111" stroke-width="1.3" stroke-linejoin="round"/><path d="M876.8 494.6 H889.3" stroke="#111" stroke-width="1.1"/><path d="M865.6 492 H871.4 L874.2 498 L872.3 498.5 L878.2 509.8 L868.8 500.3 L870.6 499.7 Z" fill="#111"/><path d="M883.3 506.5 V498.8 M880.1 502 L883.3 498.8 L886.5 502" stroke="#111" stroke-width="1.1" fill="none"/></svg>
<div class="a" style="left:30px;top:225px;width:175px;height:79px;border:1px solid #dcdcdc;"></div>
<div class="a" style="left:34.2px;top:223px;width:29.20170390625px;height:5px;background:#fff;"></div>
<div class="t" style="left:36.2px;top:218.5px;transform-origin:0 50%;font-family:'Liberation Sans',sans-serif;font-size:9.5px;font-weight:700;color:#000;line-height:14px;transform:scaleX(0.955);">DI/DO</div>
<div class="a" style="left:42.00px;top:238.10px;width:12.60px;height:12.60px;border-radius:50%;border:2px solid #555;background:#c8c8c8;"></div>
<div class="a" style="left:45.10px;top:241.20px;width:10.40px;height:10.40px;border-radius:50%;background:radial-gradient(circle 6px at 50% 46%, #e4e4e4 0%, #a8a8a8 40%, #7c7c7c 80%, #626262 100%);"></div>
<div class="t" style="left:61.5px;top:239.0px;transform-origin:0 50%;font-family:'Liberation Sans',sans-serif;font-size:9px;font-weight:400;color:#000;line-height:14px;transform:scaleX(0.835);">DI1</div>
<div class="a" style="left:93.30px;top:238.10px;width:12.60px;height:12.60px;border-radius:50%;border:2px solid #555;background:#c8c8c8;"></div>
<div class="a" style="left:96.40px;top:241.20px;width:10.40px;height:10.40px;border-radius:50%;background:radial-gradient(circle 6px at 50% 46%, #e4e4e4 0%, #a8a8a8 40%, #7c7c7c 80%, #626262 100%);"></div>
<div class="t" style="left:112.8px;top:239.0px;transform-origin:0 50%;font-family:'Liberation Sans',sans-serif;font-size:9px;font-weight:400;color:#000;line-height:14px;transform:scaleX(0.835);">DI2</div>
<div class="a" style="left:141.50px;top:238.10px;width:12.60px;height:12.60px;border-radius:50%;border:2px solid #555;background:#c8c8c8;"></div>
<div class="a" style="left:144.60px;top:241.20px;width:10.40px;height:10.40px;border-radius:50%;background:radial-gradient(circle 6px at 50% 46%, #e4e4e4 0%, #a8a8a8 40%, #7c7c7c 80%, #626262 100%);"></div>
<div class="t" style="left:161.0px;top:239.0px;transform-origin:0 50%;font-family:'Liberation Sans',sans-serif;font-size:9px;font-weight:400;color:#000;line-height:14px;transform:scaleX(0.835);">DI3</div>
<div class="a" style="left:42.00px;top:261.10px;width:12.60px;height:12.60px;border-radius:50%;border:2px solid #555;background:#c8c8c8;"></div>
<div class="a" style="left:45.10px;top:264.20px;width:10.40px;height:10.40px;border-radius:50%;background:radial-gradient(circle 6px at 50% 46%, #e4e4e4 0%, #a8a8a8 40%, #7c7c7c 80%, #626262 100%);"></div>
<div class="t" style="left:61.5px;top:262.0px;transform-origin:0 50%;font-family:'Liberation Sans',sans-serif;font-size:9px;font-weight:400;color:#000;line-height:14px;transform:scaleX(0.835);">DI4</div>
<div class="a" style="left:93.30px;top:261.10px;width:12.60px;height:12.60px;border-radius:50%;border:2px solid #555;background:#c8c8c8;"></div>
<div class="a" style="left:96.40px;top:264.20px;width:10.40px;height:10.40px;border-radius:50%;background:radial-gradient(circle 6px at 50% 46%, #e4e4e4 0%, #a8a8a8 40%, #7c7c7c 80%, #626262 100%);"></div>
<div class="t" style="left:112.8px;top:262.0px;transform-origin:0 50%;font-family:'Liberation Sans',sans-serif;font-size:9px;font-weight:400;color:#000;line-height:14px;transform:scaleX(0.835);">DI5</div>
<div class="a" style="left:42.00px;top:284.10px;width:12.60px;height:12.60px;border-radius:50%;border:2px solid #555;background:#c8c8c8;"></div>
<div class="a" style="left:45.10px;top:287.20px;width:10.40px;height:10.40px;border-radius:50%;background:radial-gradient(circle 6px at 50% 46%, #e4e4e4 0%, #a8a8a8 40%, #7c7c7c 80%, #626262 100%);"></div>
<div class="t" style="left:61.5px;top:285.0px;transform-origin:0 50%;font-family:'Liberation Sans',sans-serif;font-size:9px;font-weight:400;color:#000;line-height:14px;transform:scaleX(0.803);">+L(DI6)</div>
<div class="a" style="left:93.30px;top:284.10px;width:12.60px;height:12.60px;border-radius:50%;border:2px solid #555;background:#c8c8c8;"></div>
<div class="a" style="left:96.40px;top:287.20px;width:10.40px;height:10.40px;border-radius:50%;background:radial-gradient(circle 6px at 50% 46%, #e4e4e4 0%, #a8a8a8 40%, #7c7c7c 80%, #626262 100%);"></div>
<div class="t" style="left:112.8px;top:285.0px;transform-origin:0 50%;font-family:'Liberation Sans',sans-serif;font-size:9px;font-weight:400;color:#000;line-height:14px;transform:scaleX(0.808);">H(DI7)</div>
<div class="a" style="left:141.50px;top:284.10px;width:12.60px;height:12.60px;border-radius:50%;border:2px solid #555;background:#c8c8c8;"></div>
<div class="a" style="left:144.60px;top:287.20px;width:10.40px;height:10.40px;border-radius:50%;background:radial-gradient(circle 6px at 50% 46%, #e4e4e4 0%, #a8a8a8 40%, #7c7c7c 80%, #626262 100%);"></div>
<div class="t" style="left:161.0px;top:285.0px;transform-origin:0 50%;font-family:'Liberation Sans',sans-serif;font-size:9px;font-weight:400;color:#000;line-height:14px;transform:scaleX(0.818);">-L(DI8)</div>
<div class="a" style="left:195.2px;top:240px;width:1.2px;height:56px;background:#555;"></div>
<div class="a" style="left:30px;top:314px;width:175px;height:41px;border:1px solid #dcdcdc;"></div>
<div class="a" style="left:34.7px;top:312px;width:91.73958046875px;height:5px;background:#fff;"></div>
<div class="t" style="left:36.7px;top:307.5px;transform-origin:0 50%;font-family:'Liberation Sans',sans-serif;font-size:9.5px;font-weight:700;color:#000;line-height:14px;transform:scaleX(0.955);">Servo / Clear / Reset</div>
<div class="a" style="left:37.3px;top:329px;width:35.0px;height:17.5px;background:#b4f5b4;border:1px solid #a8a8a8;box-shadow:inset 0 0 0 1px #e4e4e4;"></div>
<div class="t" style="left:-144.2px;width:400px;text-align:center;top:331.5px;transform-origin:50% 50%;font-family:'Liberation Sans',sans-serif;font-size:10px;font-weight:400;color:#000;line-height:14px;transform:scaleX(0.836);">SVON</div>
<div class="a" style="left:79.3px;top:329px;width:35.7px;height:17.5px;background:#ff8080;border:1px solid #a8a8a8;box-shadow:inset 0 0 0 1px #e4e4e4;"></div>
<div class="t" style="left:-101.85px;width:400px;text-align:center;top:331.5px;transform-origin:50% 50%;font-family:'Liberation Sans',sans-serif;font-size:10px;font-weight:400;color:#000;line-height:14px;transform:scaleX(0.84);">SVOFF</div>
<div class="a" style="left:122.2px;top:329px;width:35.10000000000001px;height:17.5px;background:#ffffc0;border:1px solid #a8a8a8;box-shadow:inset 0 0 0 1px #e4e4e4;"></div>
<div class="t" style="left:-59.25px;width:400px;text-align:center;top:331.5px;transform-origin:50% 50%;font-family:'Liberation Sans',sans-serif;font-size:10px;font-weight:400;color:#000;line-height:14px;transform:scaleX(0.829);">Clear</div>
<div class="a" style="left:164.3px;top:329px;width:35.69999999999999px;height:17.5px;background:#c0f8ff;border:1px solid #a8a8a8;box-shadow:inset 0 0 0 1px #e4e4e4;"></div>
<div class="t" style="left:-16.849999999999994px;width:400px;text-align:center;top:331.5px;transform-origin:50% 50%;font-family:'Liberation Sans',sans-serif;font-size:10px;font-weight:400;color:#000;line-height:14px;transform:scaleX(0.873);">Reset</div>
<div class="a" style="left:30px;top:375px;width:411px;height:219px;background:#fff;border:1px solid #d9d9d9;"></div>
<div class="a" style="left:71px;top:362px;width:33px;height:13px;background:#f0f0f0;border:1px solid #d9d9d9;"></div>
<div class="a" style="left:104.8px;top:362px;width:37px;height:13px;background:#f0f0f0;border:1px solid #d9d9d9;"></div>
<div class="a" style="left:142.6px;top:362px;width:65px;height:13px;background:#f0f0f0;border:1px solid #d9d9d9;"></div>
<div class="a" style="left:30.5px;top:359.5px;width:40px;height:16px;background:#fff;border:1px solid #d9d9d9;border-bottom:none;"></div>
<div class="t" style="left:35.8px;top:360.5px;transform-origin:0 50%;font-family:'Liberation Sans',sans-serif;font-size:9.5px;font-weight:400;color:#000;line-height:14px;transform:scaleX(0.879);">Position</div>
<div class="t" style="left:75.2px;top:362.0px;transform-origin:0 50%;font-family:'Liberation Sans',sans-serif;font-size:9.5px;font-weight:400;color:#000;line-height:14px;transform:scaleX(0.903);">Speed</div>
<div class="t" style="left:109.7px;top:362.0px;transform-origin:0 50%;font-family:'Liberation Sans',sans-serif;font-size:9.5px;font-weight:400;color:#000;line-height:14px;transform:scaleX(0.906);">Current</div>
<div class="t" style="left:148.1px;top:362.0px;transform-origin:0 50%;font-family:'Liberation Sans',sans-serif;font-size:9.5px;font-weight:400;color:#000;line-height:14px;transform:scaleX(0.87);">Preset Motion</div>
<div class="a" style="left:36px;top:381px;width:397.5px;height:133px;background:#f2f2f2;border-left:1px solid #333;border-top:1px solid #555;border-right:1.5px solid #111;border-bottom:2px solid #555;box-shadow:inset 1px 1px 0 #fff;"></div>
<div class="a" style="left:80px;top:395.5px;width:348.3px;height:115.80000000000001px;background:#c0c0c0;"></div>
<svg class="a" style="left:76px;top:394.5px" width="354.3" height="122.80000000000001" viewBox="76 394.5 354.3 122.80000000000001"><line x1="78.80" y1="395.5" x2="78.80" y2="511.3" stroke="#ffffff" stroke-width="0.8" opacity="0.55"/><line x1="81.20" y1="395.5" x2="81.20" y2="511.3" stroke="#ffffff" stroke-width="0.8" opacity="0.55"/><line x1="96.71" y1="395.5" x2="96.71" y2="511.3" stroke="#ffffff" stroke-width="0.8" opacity="0.55"/><line x1="99.11" y1="395.5" x2="99.11" y2="511.3" stroke="#ffffff" stroke-width="0.8" opacity="0.55"/><line x1="114.13" y1="395.5" x2="114.13" y2="511.3" stroke="#ffffff" stroke-width="0.8" opacity="0.55"/><line x1="116.53" y1="395.5" x2="116.53" y2="511.3" stroke="#ffffff" stroke-width="0.8" opacity="0.55"/><line x1="131.55" y1="395.5" x2="131.55" y2="511.3" stroke="#ffffff" stroke-width="0.8" opacity="0.55"/><line x1="133.94" y1="395.5" x2="133.94" y2="511.3" stroke="#ffffff" stroke-width="0.8" opacity="0.55"/><line x1="148.96" y1="395.5" x2="148.96" y2="511.3" stroke="#ffffff" stroke-width="0.8" opacity="0.55"/><line x1="151.36" y1="395.5" x2="151.36" y2="511.3" stroke="#ffffff" stroke-width="0.8" opacity="0.55"/><line x1="166.38" y1="395.5" x2="166.38" y2="511.3" stroke="#ffffff" stroke-width="0.8" opacity="0.55"/><line x1="168.77" y1="395.5" x2="168.77" y2="511.3" stroke="#ffffff" stroke-width="0.8" opacity="0.55"/><line x1="183.79" y1="395.5" x2="183.79" y2="511.3" stroke="#ffffff" stroke-width="0.8" opacity="0.55"/><line x1="186.19" y1="395.5" x2="186.19" y2="511.3" stroke="#ffffff" stroke-width="0.8" opacity="0.55"/><line x1="201.21" y1="395.5" x2="201.21" y2="511.3" stroke="#ffffff" stroke-width="0.8" opacity="0.55"/><line x1="203.60" y1="395.5" x2="203.60" y2="511.3" stroke="#ffffff" stroke-width="0.8" opacity="0.55"/><line x1="218.62" y1="395.5" x2="218.62" y2="511.3" stroke="#ffffff" stroke-width="0.8" opacity="0.55"/><line x1="221.02" y1="395.5" x2="221.02" y2="511.3" stroke="#ffffff" stroke-width="0.8" opacity="0.55"/><line x1="236.04" y1="395.5" x2="236.04" y2="511.3" stroke="#ffffff" stroke-width="0.8" opacity="0.55"/><line x1="238.44" y1="395.5" x2="238.44" y2="511.3" stroke="#ffffff" stroke-width="0.8" opacity="0.55"/><line x1="253.45" y1="395.5" x2="253.45" y2="511.3" stroke="#ffffff" stroke-width="0.8" opacity="0.55"/><line x1="255.85" y1="395.5" x2="255.85" y2="511.3" stroke="#ffffff" stroke-width="0.8" opacity="0.55"/><line x1="270.87" y1="395.5" x2="270.87" y2="511.3" stroke="#ffffff" stroke-width="0.8" opacity="0.55"/><line x1="273.26" y1="395.5" x2="273.26" y2="511.3" stroke="#ffffff" stroke-width="0.8" opacity="0.55"/><line x1="288.28" y1="395.5" x2="288.28" y2="511.3" stroke="#ffffff" stroke-width="0.8" opacity="0.55"/><line x1="290.68" y1="395.5" x2="290.68" y2="511.3" stroke="#ffffff" stroke-width="0.8" opacity="0.55"/><line x1="305.70" y1="395.5" x2="305.70" y2="511.3" stroke="#ffffff" stroke-width="0.8" opacity="0.55"/><line x1="308.10" y1="395.5" x2="308.10" y2="511.3" stroke="#ffffff" stroke-width="0.8" opacity="0.55"/><line x1="323.11" y1="395.5" x2="323.11" y2="511.3" stroke="#ffffff" stroke-width="0.8" opacity="0.55"/><line x1="325.51" y1="395.5" x2="325.51" y2="511.3" stroke="#ffffff" stroke-width="0.8" opacity="0.55"/><line x1="340.53" y1="395.5" x2="340.53" y2="511.3" stroke="#ffffff" stroke-width="0.8" opacity="0.55"/><line x1="342.93" y1="395.5" x2="342.93" y2="511.3" stroke="#ffffff" stroke-width="0.8" opacity="0.55"/><line x1="357.94" y1="395.5" x2="357.94" y2="511.3" stroke="#ffffff" stroke-width="0.8" opacity="0.55"/><line x1="360.34" y1="395.5" x2="360.34" y2="511.3" stroke="#ffffff" stroke-width="0.8" opacity="0.55"/><line x1="375.36" y1="395.5" x2="375.36" y2="511.3" stroke="#ffffff" stroke-width="0.8" opacity="0.55"/><line x1="377.75" y1="395.5" x2="377.75" y2="511.3" stroke="#ffffff" stroke-width="0.8" opacity="0.55"/><line x1="392.77" y1="395.5" x2="392.77" y2="511.3" stroke="#ffffff" stroke-width="0.8" opacity="0.55"/><line x1="395.17" y1="395.5" x2="395.17" y2="511.3" stroke="#ffffff" stroke-width="0.8" opacity="0.55"/><line x1="410.19" y1="395.5" x2="410.19" y2="511.3" stroke="#ffffff" stroke-width="0.8" opacity="0.55"/><line x1="412.58" y1="395.5" x2="412.58" y2="511.3" stroke="#ffffff" stroke-width="0.8" opacity="0.55"/><line x1="427.10" y1="395.5" x2="427.10" y2="511.3" stroke="#ffffff" stroke-width="0.8" opacity="0.55"/><line x1="429.50" y1="395.5" x2="429.50" y2="511.3" stroke="#ffffff" stroke-width="0.8" opacity="0.55"/><line x1="80" y1="394.30" x2="428.3" y2="394.30" stroke="#ffffff" stroke-width="0.8" opacity="0.55"/><line x1="80" y1="396.70" x2="428.3" y2="396.70" stroke="#ffffff" stroke-width="0.8" opacity="0.55"/><line x1="80" y1="410.84" x2="428.3" y2="410.84" stroke="#ffffff" stroke-width="0.8" opacity="0.55"/><line x1="80" y1="413.24" x2="428.3" y2="413.24" stroke="#ffffff" stroke-width="0.8" opacity="0.55"/><line x1="80" y1="427.39" x2="428.3" y2="427.39" stroke="#ffffff" stroke-width="0.8" opacity="0.55"/><line x1="80" y1="429.79" x2="428.3" y2="429.79" stroke="#ffffff" stroke-width="0.8" opacity="0.55"/><line x1="80" y1="443.93" x2="428.3" y2="443.93" stroke="#ffffff" stroke-width="0.8" opacity="0.55"/><line x1="80" y1="446.33" x2="428.3" y2="446.33" stroke="#ffffff" stroke-width="0.8" opacity="0.55"/><line x1="80" y1="460.47" x2="428.3" y2="460.47" stroke="#ffffff" stroke-width="0.8" opacity="0.55"/><line x1="80" y1="462.87" x2="428.3" y2="462.87" stroke="#ffffff" stroke-width="0.8" opacity="0.55"/><line x1="80" y1="477.01" x2="428.3" y2="477.01" stroke="#ffffff" stroke-width="0.8" opacity="0.55"/><line x1="80" y1="479.41" x2="428.3" y2="479.41" stroke="#ffffff" stroke-width="0.8" opacity="0.55"/><line x1="80" y1="493.56" x2="428.3" y2="493.56" stroke="#ffffff" stroke-width="0.8" opacity="0.55"/><line x1="80" y1="495.96" x2="428.3" y2="495.96" stroke="#ffffff" stroke-width="0.8" opacity="0.55"/><line x1="80" y1="510.10" x2="428.3" y2="510.10" stroke="#ffffff" stroke-width="0.8" opacity="0.55"/><line x1="80" y1="512.50" x2="428.3" y2="512.50" stroke="#ffffff" stroke-width="0.8" opacity="0.55"/><line x1="80.00" y1="395.5" x2="80.00" y2="515.3" stroke="#222" stroke-width="1"/><line x1="97.91" y1="395.5" x2="97.91" y2="515.3" stroke="#222" stroke-width="1"/><line x1="115.33" y1="395.5" x2="115.33" y2="515.3" stroke="#222" stroke-width="1"/><line x1="132.75" y1="395.5" x2="132.75" y2="515.3" stroke="#222" stroke-width="1"/><line x1="150.16" y1="395.5" x2="150.16" y2="515.3" stroke="#222" stroke-width="1"/><line x1="167.57" y1="395.5" x2="167.57" y2="515.3" stroke="#222" stroke-width="1"/><line x1="184.99" y1="395.5" x2="184.99" y2="515.3" stroke="#222" stroke-width="1"/><line x1="202.41" y1="395.5" x2="202.41" y2="515.3" stroke="#222" stroke-width="1"/><line x1="219.82" y1="395.5" x2="219.82" y2="515.3" stroke="#222" stroke-width="1"/><line x1="237.24" y1="395.5" x2="237.24" y2="515.3" stroke="#222" stroke-width="1"/><line x1="254.65" y1="395.5" x2="254.65" y2="515.3" stroke="#222" stroke-width="1"/><line x1="272.06" y1="395.5" x2="272.06" y2="515.3" stroke="#222" stroke-width="1"/><line x1="289.48" y1="395.5" x2="289.48" y2="515.3" stroke="#222" stroke-width="1"/><line x1="306.90" y1="395.5" x2="306.90" y2="515.3" stroke="#222" stroke-width="1"/><line x1="324.31" y1="395.5" x2="324.31" y2="515.3" stroke="#222" stroke-width="1"/><line x1="341.73" y1="395.5" x2="341.73" y2="515.3" stroke="#222" stroke-width="1"/><line x1="359.14" y1="395.5" x2="359.14" y2="515.3" stroke="#222" stroke-width="1"/><line x1="376.56" y1="395.5" x2="376.56" y2="515.3" stroke="#222" stroke-width="1"/><line x1="393.97" y1="395.5" x2="393.97" y2="515.3" stroke="#222" stroke-width="1"/><line x1="411.38" y1="395.5" x2="411.38" y2="515.3" stroke="#222" stroke-width="1"/><line x1="428.30" y1="395.5" x2="428.30" y2="515.3" stroke="#222" stroke-width="1"/><line x1="77" y1="395.50" x2="428.3" y2="395.50" stroke="#222" stroke-width="1"/><line x1="77" y1="412.04" x2="428.3" y2="412.04" stroke="#222" stroke-width="1"/><line x1="77" y1="428.59" x2="428.3" y2="428.59" stroke="#222" stroke-width="1"/><line x1="77" y1="445.13" x2="428.3" y2="445.13" stroke="#222" stroke-width="1"/><line x1="77" y1="461.67" x2="428.3" y2="461.67" stroke="#222" stroke-width="1"/><line x1="77" y1="478.21" x2="428.3" y2="478.21" stroke="#222" stroke-width="1"/><line x1="77" y1="494.76" x2="428.3" y2="494.76" stroke="#222" stroke-width="1"/><line x1="77" y1="511.30" x2="428.3" y2="511.30" stroke="#222" stroke-width="1"/><line x1="80" y1="395.5" x2="80" y2="511.3" stroke="#000" stroke-width="1.6"/><line x1="80" y1="511.3" x2="428.3" y2="511.3" stroke="#000" stroke-width="1.4"/><line x1="428.3" y1="395.5" x2="428.3" y2="511.3" stroke="#000" stroke-width="1.2"/></svg>
<div class="t" style="left:-325px;width:400px;text-align:right;top:389.0px;transform-origin:100% 50%;font-family:'Liberation Sans',sans-serif;font-size:9.5px;font-weight:400;color:#111;line-height:14px;transform:scaleX(0.95);">0</div>
<div class="t" style="left:-325px;width:400px;text-align:right;top:405.57px;transform-origin:100% 50%;font-family:'Liberation Sans',sans-serif;font-size:9.5px;font-weight:400;color:#111;line-height:14px;transform:scaleX(0.95);">-200000</div>
<div class="t" style="left:-325px;width:400px;text-align:right;top:422.14px;transform-origin:100% 50%;font-family:'Liberation Sans',sans-serif;font-size:9.5px;font-weight:400;color:#111;line-height:14px;transform:scaleX(0.95);">-400000</div>
<div class="t" style="left:-325px;width:400px;text-align:right;top:438.71px;transform-origin:100% 50%;font-family:'Liberation Sans',sans-serif;font-size:9.5px;font-weight:400;color:#111;line-height:14px;transform:scaleX(0.95);">-600000</div>
<div class="t" style="left:-325px;width:400px;text-align:right;top:455.28px;transform-origin:100% 50%;font-family:'Liberation Sans',sans-serif;font-size:9.5px;font-weight:400;color:#111;line-height:14px;transform:scaleX(0.95);">-800000</div>
<div class="t" style="left:-325px;width:400px;text-align:right;top:471.85px;transform-origin:100% 50%;font-family:'Liberation Sans',sans-serif;font-size:9.5px;font-weight:400;color:#111;line-height:14px;transform:scaleX(0.95);">-1000000</div>
<div class="t" style="left:-325px;width:400px;text-align:right;top:488.42px;transform-origin:100% 50%;font-family:'Liberation Sans',sans-serif;font-size:9.5px;font-weight:400;color:#111;line-height:14px;transform:scaleX(0.95);">-1200000</div>
<div class="t" style="left:-325px;width:400px;text-align:right;top:504.99px;transform-origin:100% 50%;font-family:'Liberation Sans',sans-serif;font-size:9.5px;font-weight:400;color:#111;line-height:14px;transform:scaleX(0.95);">-1400000</div>
<div class="t" style="left:85.1px;top:383.0px;transform-origin:0 50%;font-family:'Liberation Sans',sans-serif;font-size:9px;font-weight:700;color:#222;line-height:14px;transform:scaleX(0.798);">[15:19:18.60]</div>
<div class="a" style="left:136px;top:386px;width:5px;height:6px;background:#0000ff;border:0.5px solid #000;"></div>
<div class="t" style="left:144.4px;top:383.0px;transform-origin:0 50%;font-family:'Liberation Sans',sans-serif;font-size:9px;font-weight:400;color:#000;line-height:14px;transform:scaleX(0.85);">Actual Pos: -1129194</div>
<div class="a" style="left:125.4px;top:396px;width:1.2px;height:115px;background:#9a9a9a;"></div>
<svg class="a" style="left:78px;top:485px" width="52" height="8" viewBox="78 485 52 8"><path d="M80 488.7 L125.9 489.2" stroke="#5a1ed0" stroke-width="1.9"/></svg>
<div class="a" style="left:123.7px;top:487px;width:4.6px;height:4.6px;border-radius:50%;background:#0a0aff"></div>
<div class="a" style="left:36px;top:518px;width:397.5px;height:69px;background:#f2f2f2;border-left:1px solid #333;border-top:1px solid #555;border-right:1.5px solid #111;border-bottom:2px solid #555;box-shadow:inset 1px 1px 0 #fff;"></div>
<div class="a" style="left:80px;top:532.3px;width:348.3px;height:51.200000000000045px;background:#ff0000;"></div>
<svg class="a" style="left:76px;top:531.3px" width="354.3" height="58.200000000000045" viewBox="76 531.3 354.3 58.200000000000045"><line x1="80.00" y1="532.3" x2="80.00" y2="587.5" stroke="#222" stroke-width="1"/><line x1="97.91" y1="532.3" x2="97.91" y2="587.5" stroke="#222" stroke-width="1"/><line x1="115.33" y1="532.3" x2="115.33" y2="587.5" stroke="#222" stroke-width="1"/><line x1="132.75" y1="532.3" x2="132.75" y2="587.5" stroke="#222" stroke-width="1"/><line x1="150.16" y1="532.3" x2="150.16" y2="587.5" stroke="#222" stroke-width="1"/><line x1="167.57" y1="532.3" x2="167.57" y2="587.5" stroke="#222" stroke-width="1"/><line x1="184.99" y1="532.3" x2="184.99" y2="587.5" stroke="#222" stroke-width="1"/><line x1="202.41" y1="532.3" x2="202.41" y2="587.5" stroke="#222" stroke-width="1"/><line x1="219.82" y1="532.3" x2="219.82" y2="587.5" stroke="#222" stroke-width="1"/><line x1="237.24" y1="532.3" x2="237.24" y2="587.5" stroke="#222" stroke-width="1"/><line x1="254.65" y1="532.3" x2="254.65" y2="587.5" stroke="#222" stroke-width="1"/><line x1="272.06" y1="532.3" x2="272.06" y2="587.5" stroke="#222" stroke-width="1"/><line x1="289.48" y1="532.3" x2="289.48" y2="587.5" stroke="#222" stroke-width="1"/><line x1="306.90" y1="532.3" x2="306.90" y2="587.5" stroke="#222" stroke-width="1"/><line x1="324.31" y1="532.3" x2="324.31" y2="587.5" stroke="#222" stroke-width="1"/><line x1="341.73" y1="532.3" x2="341.73" y2="587.5" stroke="#222" stroke-width="1"/><line x1="359.14" y1="532.3" x2="359.14" y2="587.5" stroke="#222" stroke-width="1"/><line x1="376.56" y1="532.3" x2="376.56" y2="587.5" stroke="#222" stroke-width="1"/><line x1="393.97" y1="532.3" x2="393.97" y2="587.5" stroke="#222" stroke-width="1"/><line x1="411.38" y1="532.3" x2="411.38" y2="587.5" stroke="#222" stroke-width="1"/><line x1="428.30" y1="532.3" x2="428.30" y2="587.5" stroke="#222" stroke-width="1"/><line x1="77" y1="532.30" x2="428.3" y2="532.30" stroke="#222" stroke-width="1"/><line x1="77" y1="557.90" x2="428.3" y2="557.90" stroke="#222" stroke-width="1"/><line x1="77" y1="583.50" x2="428.3" y2="583.50" stroke="#222" stroke-width="1"/><line x1="80" y1="532.3" x2="80" y2="583.5" stroke="#000" stroke-width="1.6"/><line x1="80" y1="583.5" x2="428.3" y2="583.5" stroke="#000" stroke-width="1.4"/><line x1="428.3" y1="532.3" x2="428.3" y2="583.5" stroke="#000" stroke-width="1.2"/></svg>
<div class="t" style="left:-324.5px;width:400px;text-align:right;top:525.5px;transform-origin:100% 50%;font-family:'Liberation Sans',sans-serif;font-size:9.5px;font-weight:400;color:#111;line-height:14px;transform:scaleX(0.82);">10</div>
<div class="t" style="left:-324.5px;width:400px;text-align:right;top:551.0px;transform-origin:100% 50%;font-family:'Liberation Sans',sans-serif;font-size:9.5px;font-weight:400;color:#111;line-height:14px;transform:scaleX(0.82);">0</div>
<div class="t" style="left:-324.5px;width:400px;text-align:right;top:576.5px;transform-origin:100% 50%;font-family:'Liberation Sans',sans-serif;font-size:9.5px;font-weight:400;color:#111;line-height:14px;transform:scaleX(0.82);">-10</div>
<div class="t" style="left:37px;top:551px;width:36px;height:14px;line-height:14px;text-align:center;font-size:9px;transform:rotate(-90deg) scaleX(0.82);font-family:'Liberation Sans',sans-serif;">Error</div>
<div class="t" style="left:84.7px;top:519.4px;transform-origin:0 50%;font-family:'Liberation Sans',sans-serif;font-size:9px;font-weight:700;color:#222;line-height:14px;transform:scaleX(0.798);">[15:19:18.60]</div>
<div class="a" style="left:135.5px;top:523px;width:5px;height:5px;background:#fff;border:1px solid #222;"></div>
<div class="t" style="left:144.7px;top:519.5px;transform-origin:0 50%;font-family:'Liberation Sans',sans-serif;font-size:9px;font-weight:400;color:#000;line-height:14px;transform:scaleX(0.839);">Pos Error: -2</div>
<div class="a" style="left:126px;top:532.5px;width:1px;height:51px;background:#c04040;"></div>
<svg class="a" style="left:80px;top:532px" width="50" height="52" viewBox="0 0 50 52"><polyline points="1.3,36 4,28 7.8,15.7 10,26 12.4,37 15,26.8 18,13 21,30 23.5,32 28.6,13 32,32.7 35.4,31 38.8,13 42.2,33.6 46,32" fill="none" stroke="#ffd8d8" stroke-width="1.1"/><circle cx="46" cy="32" r="2.2" fill="#fff"/></svg>
<div class="a" style="left:458px;top:412px;width:46px;height:39px;background:#e1e1e1;border:1px solid #adadad;"></div>
<div class="a" style="left:458px;top:458px;width:46px;height:38px;background:#e1e1e1;border:1px solid #adadad;"></div>
<div class="a" style="left:458px;top:505px;width:46px;height:37px;background:#e1e1e1;border:1px solid #adadad;"></div>
<div class="a" style="left:458px;top:552px;width:46px;height:37px;background:#e1e1e1;border:1px solid #adadad;"></div>
<svg class="a" style="left:466px;top:412px" width="32" height="36" viewBox="466 412 32 36"><rect x="468" y="416" width="27" height="24.7" rx="1.2" fill="#111"/><rect x="470" y="418" width="23" height="18.6" fill="#fff"/><polyline points="472,434 475,430 477,431 480,427 483,429 486,425 489,427 492,424" fill="none" stroke="#b09090" stroke-width="0.8"/><rect x="479" y="440.5" width="6" height="3.2" fill="#111"/><rect x="474" y="443.4" width="15.6" height="2.2" fill="#111"/></svg>
<svg class="a" style="left:460px;top:466px" width="42" height="20" viewBox="460 466 42 20"><ellipse cx="469.5" cy="471.5" rx="3" ry="2.2" fill="none" stroke="#333" stroke-width="0.9"/><path d="M467 473 C463 474 463 478 466 479" fill="none" stroke="#333" stroke-width="0.9"/><rect x="465.5" y="477" width="19" height="4.2" rx="2" fill="#2a2a2a"/><path d="M468 478 H483 M468 480 H483" stroke="#666" stroke-width="0.5"/><rect x="483.5" y="475.8" width="3.2" height="6.6" rx="1" fill="#111"/><path d="M486.5 477.3 L492.5 478.6 V479.6 L486.5 480.9 Z" fill="#333"/><path d="M492 479.1 H500" stroke="#444" stroke-width="0.8"/></svg>
<svg class="a" style="left:470px;top:508px" width="24" height="34" viewBox="470 508 24 34"><rect x="478.6" y="511.3" width="6.1" height="9.9" fill="#333"/><path d="M478 521 H485.3 L486.4 523.4 L485.3 525.8 H478 L476.9 523.4 Z" fill="#333"/><path d="M477.6 525.2 L474.3 531.1 L478.9 538.2 M479.6 527.6 L478.2 531.6 L478.9 538.2" fill="none" stroke="#2a2a2a" stroke-width="1.5" stroke-linejoin="round"/><path d="M485.7 525.2 L489 531.1 L484.4 538.2 M483.7 527.6 L485.1 531.6 L484.4 538.2" fill="none" stroke="#2a2a2a" stroke-width="1.5" stroke-linejoin="round"/></svg>
<svg class="a" style="left:468px;top:558px" width="28" height="26" viewBox="468 558 28 26"><circle cx="481.5" cy="564" r="2.7" fill="#222"/><path d="M481.5 566 V574" stroke="#555" stroke-width="1"/><path d="M478.5 573.2 H484.5 L486.5 575.8 H476.5 Z" fill="#555"/><rect x="471.2" y="575.6" width="20.6" height="5.4" rx="1.3" fill="#151515"/><path d="M484 578.3 H485.3 M486.6 578.3 H487.9 M489.2 578.3 H490.5 M473.5 577.5 H476" stroke="#999" stroke-width="0.8"/></svg>
<div class="a" style="left:201px;top:181px;width:540px;height:245.5px;border:1px solid #8e8e8e;background:#fff;box-shadow:0 4px 16px rgba(0,0,0,0.32);"></div>
<svg class="a" style="left:207.5px;top:184.9px" width="16" height="16" viewBox="207.5 184.9 16 16"><circle cx="215.5" cy="192.9" r="6.05" fill="none" stroke="#2a2a2a" stroke-width="1.45"/><path d="M212.7 191.6 V190.1 H218.1 M215.5 190.1 V196.6" stroke="#111" stroke-width="1.4" fill="none"/><circle cx="218.4" cy="193.4" r="0.8" fill="#111"/></svg>
<div class="t" style="left:225.9px;top:186.3px;transform-origin:0 50%;font-family:'Liberation Sans',sans-serif;font-size:11px;font-weight:400;color:#111;line-height:14px;transform:scaleX(0.843);">Shared Variable Memory</div>
<div class="t" style="left:235.8px;top:229.2px;transform-origin:0 50%;font-family:'Liberation Sans',sans-serif;font-size:10px;font-weight:400;color:#000;line-height:14px;transform:scaleX(0.828);">Enable Node 2</div>
<div class="a" style="left:298px;top:230px;width:9px;height:9px;background:#fff;border:1px solid #333;"></div>
<div class="t" style="left:230.2px;top:254.60000000000002px;transform-origin:0 50%;font-family:'Liberation Sans',sans-serif;font-size:10px;font-weight:400;color:#000;line-height:14px;transform:scaleX(0.871);">V21</div>
<div class="a" style="left:256px;top:254px;width:51px;height:14px;background:#f0f0f0;border:1px solid #cccccc;"></div>
<div class="t" style="left:258.4px;top:254.60000000000002px;transform-origin:0 50%;font-family:'Liberation Sans',sans-serif;font-size:10px;font-weight:400;color:#9a9a9a;line-height:14px;transform:scaleX(0.979);">NA</div>
<div class="t" style="left:230.2px;top:275.45000000000005px;transform-origin:0 50%;font-family:'Liberation Sans',sans-serif;font-size:10px;font-weight:400;color:#000;line-height:14px;transform:scaleX(0.871);">V22</div>
<div class="a" style="left:256px;top:274px;width:51px;height:14px;background:#f0f0f0;border:1px solid #cccccc;"></div>
<div class="t" style="left:258.4px;top:275.45000000000005px;transform-origin:0 50%;font-family:'Liberation Sans',sans-serif;font-size:10px;font-weight:400;color:#9a9a9a;line-height:14px;transform:scaleX(0.979);">NA</div>
<div class="t" style="left:230.2px;top:296.3px;transform-origin:0 50%;font-family:'Liberation Sans',sans-serif;font-size:10px;font-weight:400;color:#000;line-height:14px;transform:scaleX(0.871);">V23</div>
<div class="a" style="left:256px;top:295px;width:51px;height:14px;background:#f0f0f0;border:1px solid #cccccc;"></div>
<div class="t" style="left:258.4px;top:296.3px;transform-origin:0 50%;font-family:'Liberation Sans',sans-serif;font-size:10px;font-weight:400;color:#9a9a9a;line-height:14px;transform:scaleX(0.979);">NA</div>
<div class="t" style="left:230.2px;top:317.15000000000003px;transform-origin:0 50%;font-family:'Liberation Sans',sans-serif;font-size:10px;font-weight:400;color:#000;line-height:14px;transform:scaleX(0.871);">V24</div>
<div class="a" style="left:256px;top:316px;width:51px;height:14px;background:#f0f0f0;border:1px solid #cccccc;"></div>
<div class="t" style="left:258.4px;top:317.15000000000003px;transform-origin:0 50%;font-family:'Liberation Sans',sans-serif;font-size:10px;font-weight:400;color:#9a9a9a;line-height:14px;transform:scaleX(0.979);">NA</div>
<div class="t" style="left:335.9px;top:229.2px;transform-origin:0 50%;font-family:'Liberation Sans',sans-serif;font-size:10px;font-weight:400;color:#000;line-height:14px;transform:scaleX(0.828);">Enable Node 3</div>
<div class="a" style="left:398px;top:230px;width:9px;height:9px;background:#fff;border:1px solid #333;"></div>
<div class="t" style="left:331px;top:254.60000000000002px;transform-origin:0 50%;font-family:'Liberation Sans',sans-serif;font-size:10px;font-weight:400;color:#000;line-height:14px;transform:scaleX(0.871);">V31</div>
<div class="a" style="left:357px;top:254px;width:51px;height:14px;background:#f0f0f0;border:1px solid #cccccc;"></div>
<div class="t" style="left:358.8px;top:254.60000000000002px;transform-origin:0 50%;font-family:'Liberation Sans',sans-serif;font-size:10px;font-weight:400;color:#9a9a9a;line-height:14px;transform:scaleX(0.979);">NA</div>
<div class="t" style="left:331px;top:275.45000000000005px;transform-origin:0 50%;font-family:'Liberation Sans',sans-serif;font-size:10px;font-weight:400;color:#000;line-height:14px;transform:scaleX(0.871);">V32</div>
<div class="a" style="left:357px;top:274px;width:51px;height:14px;background:#f0f0f0;border:1px solid #cccccc;"></div>
<div class="t" style="left:358.8px;top:275.45000000000005px;transform-origin:0 50%;font-family:'Liberation Sans',sans-serif;font-size:10px;font-weight:400;color:#9a9a9a;line-height:14px;transform:scaleX(0.979);">NA</div>
<div class="t" style="left:331px;top:296.3px;transform-origin:0 50%;font-family:'Liberation Sans',sans-serif;font-size:10px;font-weight:400;color:#000;line-height:14px;transform:scaleX(0.871);">V33</div>
<div class="a" style="left:357px;top:295px;width:51px;height:14px;background:#f0f0f0;border:1px solid #cccccc;"></div>
<div class="t" style="left:358.8px;top:296.3px;transform-origin:0 50%;font-family:'Liberation Sans',sans-serif;font-size:10px;font-weight:400;color:#9a9a9a;line-height:14px;transform:scaleX(0.979);">NA</div>
<div class="t" style="left:331px;top:317.15000000000003px;transform-origin:0 50%;font-family:'Liberation Sans',sans-serif;font-size:10px;font-weight:400;color:#000;line-height:14px;transform:scaleX(0.871);">V34</div>
<div class="a" style="left:357px;top:316px;width:51px;height:14px;background:#f0f0f0;border:1px solid #cccccc;"></div>
<div class="t" style="left:358.8px;top:317.15000000000003px;transform-origin:0 50%;font-family:'Liberation Sans',sans-serif;font-size:10px;font-weight:400;color:#9a9a9a;line-height:14px;transform:scaleX(0.979);">NA</div>
<div class="t" style="left:437.8px;top:229.2px;transform-origin:0 50%;font-family:'Liberation Sans',sans-serif;font-size:10px;font-weight:400;color:#000;line-height:14px;transform:scaleX(0.828);">Enable Node 4</div>
<div class="a" style="left:499px;top:230px;width:9px;height:9px;background:#fff;border:1px solid #333;"></div>
<div class="t" style="left:432.6px;top:254.60000000000002px;transform-origin:0 50%;font-family:'Liberation Sans',sans-serif;font-size:10px;font-weight:400;color:#000;line-height:14px;transform:scaleX(0.871);">V41</div>
<div class="a" style="left:457px;top:254px;width:51px;height:14px;background:#f0f0f0;border:1px solid #cccccc;"></div>
<div class="t" style="left:459.5px;top:254.60000000000002px;transform-origin:0 50%;font-family:'Liberation Sans',sans-serif;font-size:10px;font-weight:400;color:#9a9a9a;line-height:14px;transform:scaleX(0.979);">NA</div>
<div class="t" style="left:432.6px;top:275.45000000000005px;transform-origin:0 50%;font-family:'Liberation Sans',sans-serif;font-size:10px;font-weight:400;color:#000;line-height:14px;transform:scaleX(0.871);">V42</div>
<div class="a" style="left:457px;top:274px;width:51px;height:14px;background:#f0f0f0;border:1px solid #cccccc;"></div>
<div class="t" style="left:459.5px;top:275.45000000000005px;transform-origin:0 50%;font-family:'Liberation Sans',sans-serif;font-size:10px;font-weight:400;color:#9a9a9a;line-height:14px;transform:scaleX(0.979);">NA</div>
<div class="t" style="left:432.6px;top:296.3px;transform-origin:0 50%;font-family:'Liberation Sans',sans-serif;font-size:10px;font-weight:400;color:#000;line-height:14px;transform:scaleX(0.871);">V43</div>
<div class="a" style="left:457px;top:295px;width:51px;height:14px;background:#f0f0f0;border:1px solid #cccccc;"></div>
<div class="t" style="left:459.5px;top:296.3px;transform-origin:0 50%;font-family:'Liberation Sans',sans-serif;font-size:10px;font-weight:400;color:#9a9a9a;line-height:14px;transform:scaleX(0.979);">NA</div>
<div class="t" style="left:432.6px;top:317.15000000000003px;transform-origin:0 50%;font-family:'Liberation Sans',sans-serif;font-size:10px;font-weight:400;color:#000;line-height:14px;transform:scaleX(0.871);">V44</div>
<div class="a" style="left:457px;top:316px;width:51px;height:14px;background:#f0f0f0;border:1px solid #cccccc;"></div>
<div class="t" style="left:459.5px;top:317.15000000000003px;transform-origin:0 50%;font-family:'Liberation Sans',sans-serif;font-size:10px;font-weight:400;color:#9a9a9a;line-height:14px;transform:scaleX(0.979);">NA</div>
<div class="t" style="left:539px;top:229.2px;transform-origin:0 50%;font-family:'Liberation Sans',sans-serif;font-size:10px;font-weight:400;color:#000;line-height:14px;transform:scaleX(0.828);">Enable Node 5</div>
<div class="a" style="left:601px;top:230px;width:9px;height:9px;background:#fff;border:1px solid #333;"></div>
<div class="t" style="left:533.8px;top:254.60000000000002px;transform-origin:0 50%;font-family:'Liberation Sans',sans-serif;font-size:10px;font-weight:400;color:#000;line-height:14px;transform:scaleX(0.871);">V51</div>
<div class="a" style="left:559px;top:254px;width:51px;height:14px;background:#f0f0f0;border:1px solid #cccccc;"></div>
<div class="t" style="left:561.4000000000001px;top:254.60000000000002px;transform-origin:0 50%;font-family:'Liberation Sans',sans-serif;font-size:10px;font-weight:400;color:#9a9a9a;line-height:14px;transform:scaleX(0.979);">NA</div>
<div class="t" style="left:533.8px;top:275.45000000000005px;transform-origin:0 50%;font-family:'Liberation Sans',sans-serif;font-size:10px;font-weight:400;color:#000;line-height:14px;transform:scaleX(0.871);">V52</div>
<div class="a" style="left:559px;top:274px;width:51px;height:14px;background:#f0f0f0;border:1px solid #cccccc;"></div>
<div class="t" style="left:561.4000000000001px;top:275.45000000000005px;transform-origin:0 50%;font-family:'Liberation Sans',sans-serif;font-size:10px;font-weight:400;color:#9a9a9a;line-height:14px;transform:scaleX(0.979);">NA</div>
<div class="t" style="left:533.8px;top:296.3px;transform-origin:0 50%;font-family:'Liberation Sans',sans-serif;font-size:10px;font-weight:400;color:#000;line-height:14px;transform:scaleX(0.871);">V53</div>
<div class="a" style="left:559px;top:295px;width:51px;height:14px;background:#f0f0f0;border:1px solid #cccccc;"></div>
<div class="t" style="left:561.4000000000001px;top:296.3px;transform-origin:0 50%;font-family:'Liberation Sans',sans-serif;font-size:10px;font-weight:400;color:#9a9a9a;line-height:14px;transform:scaleX(0.979);">NA</div>
<div class="t" style="left:533.8px;top:317.15000000000003px;transform-origin:0 50%;font-family:'Liberation Sans',sans-serif;font-size:10px;font-weight:400;color:#000;line-height:14px;transform:scaleX(0.871);">V54</div>
<div class="a" style="left:559px;top:316px;width:51px;height:14px;background:#f0f0f0;border:1px solid #cccccc;"></div>
<div class="t" style="left:561.4000000000001px;top:317.15000000000003px;transform-origin:0 50%;font-family:'Liberation Sans',sans-serif;font-size:10px;font-weight:400;color:#9a9a9a;line-height:14px;transform:scaleX(0.979);">NA</div>
<div class="t" style="left:636.6px;top:229.2px;transform-origin:0 50%;font-family:'Liberation Sans',sans-serif;font-size:10px;font-weight:400;color:#000;line-height:14px;transform:scaleX(0.828);">Enable Node 6</div>
<div class="a" style="left:699px;top:230px;width:9px;height:9px;background:#fff;border:1px solid #333;"></div>
<div class="t" style="left:631.4px;top:254.60000000000002px;transform-origin:0 50%;font-family:'Liberation Sans',sans-serif;font-size:10px;font-weight:400;color:#000;line-height:14px;transform:scaleX(0.871);">V61</div>
<div class="a" style="left:657px;top:254px;width:51px;height:14px;background:#f0f0f0;border:1px solid #cccccc;"></div>
<div class="t" style="left:659.0px;top:254.60000000000002px;transform-origin:0 50%;font-family:'Liberation Sans',sans-serif;font-size:10px;font-weight:400;color:#9a9a9a;line-height:14px;transform:scaleX(0.979);">NA</div>
<div class="t" style="left:631.4px;top:275.45000000000005px;transform-origin:0 50%;font-family:'Liberation Sans',sans-serif;font-size:10px;font-weight:400;color:#000;line-height:14px;transform:scaleX(0.871);">V62</div>
<div class="a" style="left:657px;top:274px;width:51px;height:14px;background:#f0f0f0;border:1px solid #cccccc;"></div>
<div class="t" style="left:659.0px;top:275.45000000000005px;transform-origin:0 50%;font-family:'Liberation Sans',sans-serif;font-size:10px;font-weight:400;color:#9a9a9a;line-height:14px;transform:scaleX(0.979);">NA</div>
<div class="t" style="left:631.4px;top:296.3px;transform-origin:0 50%;font-family:'Liberation Sans',sans-serif;font-size:10px;font-weight:400;color:#000;line-height:14px;transform:scaleX(0.871);">V63</div>
<div class="a" style="left:657px;top:295px;width:51px;height:14px;background:#f0f0f0;border:1px solid #cccccc;"></div>
<div class="t" style="left:659.0px;top:296.3px;transform-origin:0 50%;font-family:'Liberation Sans',sans-serif;font-size:10px;font-weight:400;color:#9a9a9a;line-height:14px;transform:scaleX(0.979);">NA</div>
<div class="t" style="left:631.4px;top:317.15000000000003px;transform-origin:0 50%;font-family:'Liberation Sans',sans-serif;font-size:10px;font-weight:400;color:#000;line-height:14px;transform:scaleX(0.871);">V64</div>
<div class="a" style="left:657px;top:316px;width:51px;height:14px;background:#f0f0f0;border:1px solid #cccccc;"></div>
<div class="t" style="left:659.0px;top:317.15000000000003px;transform-origin:0 50%;font-family:'Liberation Sans',sans-serif;font-size:10px;font-weight:400;color:#9a9a9a;line-height:14px;transform:scaleX(0.979);">NA</div>
<div class="t" style="left:251.4px;top:348.0px;transform-origin:0 50%;font-family:'Liberation Sans',sans-serif;font-size:10px;font-weight:400;color:#000;line-height:14px;transform:scaleX(0.848);">Global Shared</div>
<div class="t" style="left:230.6px;top:364.0px;transform-origin:0 50%;font-family:'Liberation Sans',sans-serif;font-size:10px;font-weight:400;color:#000;line-height:14px;transform:scaleX(0.874);">V11</div>
<div class="a" style="left:256px;top:362.5px;width:51px;height:14px;background:#fff;border:1px solid #7a7a7a;"></div>
<div class="t" style="left:258.5px;top:364.0px;transform-origin:0 50%;font-family:'Liberation Sans',sans-serif;font-size:10px;font-weight:400;color:#000;line-height:14px;transform:scaleX(0.9);">0</div>
<div class="t" style="left:230.6px;top:382.6px;transform-origin:0 50%;font-family:'Liberation Sans',sans-serif;font-size:10px;font-weight:400;color:#000;line-height:14px;transform:scaleX(0.837);">V12</div>
<div class="a" style="left:256px;top:383.3px;width:51px;height:14px;background:#fff;border:1px solid #7a7a7a;"></div>
<div class="t" style="left:258.5px;top:384.5px;transform-origin:0 50%;font-family:'Liberation Sans',sans-serif;font-size:10px;font-weight:400;color:#000;line-height:14px;transform:scaleX(0.9);">0</div>
<div class="t" style="left:382.5px;top:364.0px;transform-origin:0 50%;font-family:'Liberation Sans',sans-serif;font-size:10px;font-weight:400;color:#000;line-height:14px;transform:scaleX(0.822);">Timeout</div>
<div class="a" style="left:363.3px;top:378.7px;width:71px;height:14px;background:#fff;border:1px solid #7a7a7a;"></div>
<div class="t" style="left:365.4px;top:379.5px;transform-origin:0 50%;font-family:'Liberation Sans',sans-serif;font-size:10px;font-weight:400;color:#000;line-height:14px;transform:scaleX(0.875);">200</div>
<div class="a" style="left:501.7px;top:367.5px;width:85px;height:29px;background:#e1e1e1;border:1px solid #adadad;"></div>
<div class="t" style="left:531.5px;top:376.0px;transform-origin:0 50%;font-family:'Liberation Sans',sans-serif;font-size:10px;font-weight:400;color:#000;line-height:14px;transform:scaleX(0.821);">Upload</div>
<div class="a" style="left:620.9px;top:367.5px;width:86px;height:29px;background:#e1e1e1;border:1px solid #adadad;"></div>
<div class="t" style="left:644.9px;top:376.0px;transform-origin:0 50%;font-family:'Liberation Sans',sans-serif;font-size:10px;font-weight:400;color:#000;line-height:14px;transform:scaleX(0.877);">Download</div>
</body></html>
